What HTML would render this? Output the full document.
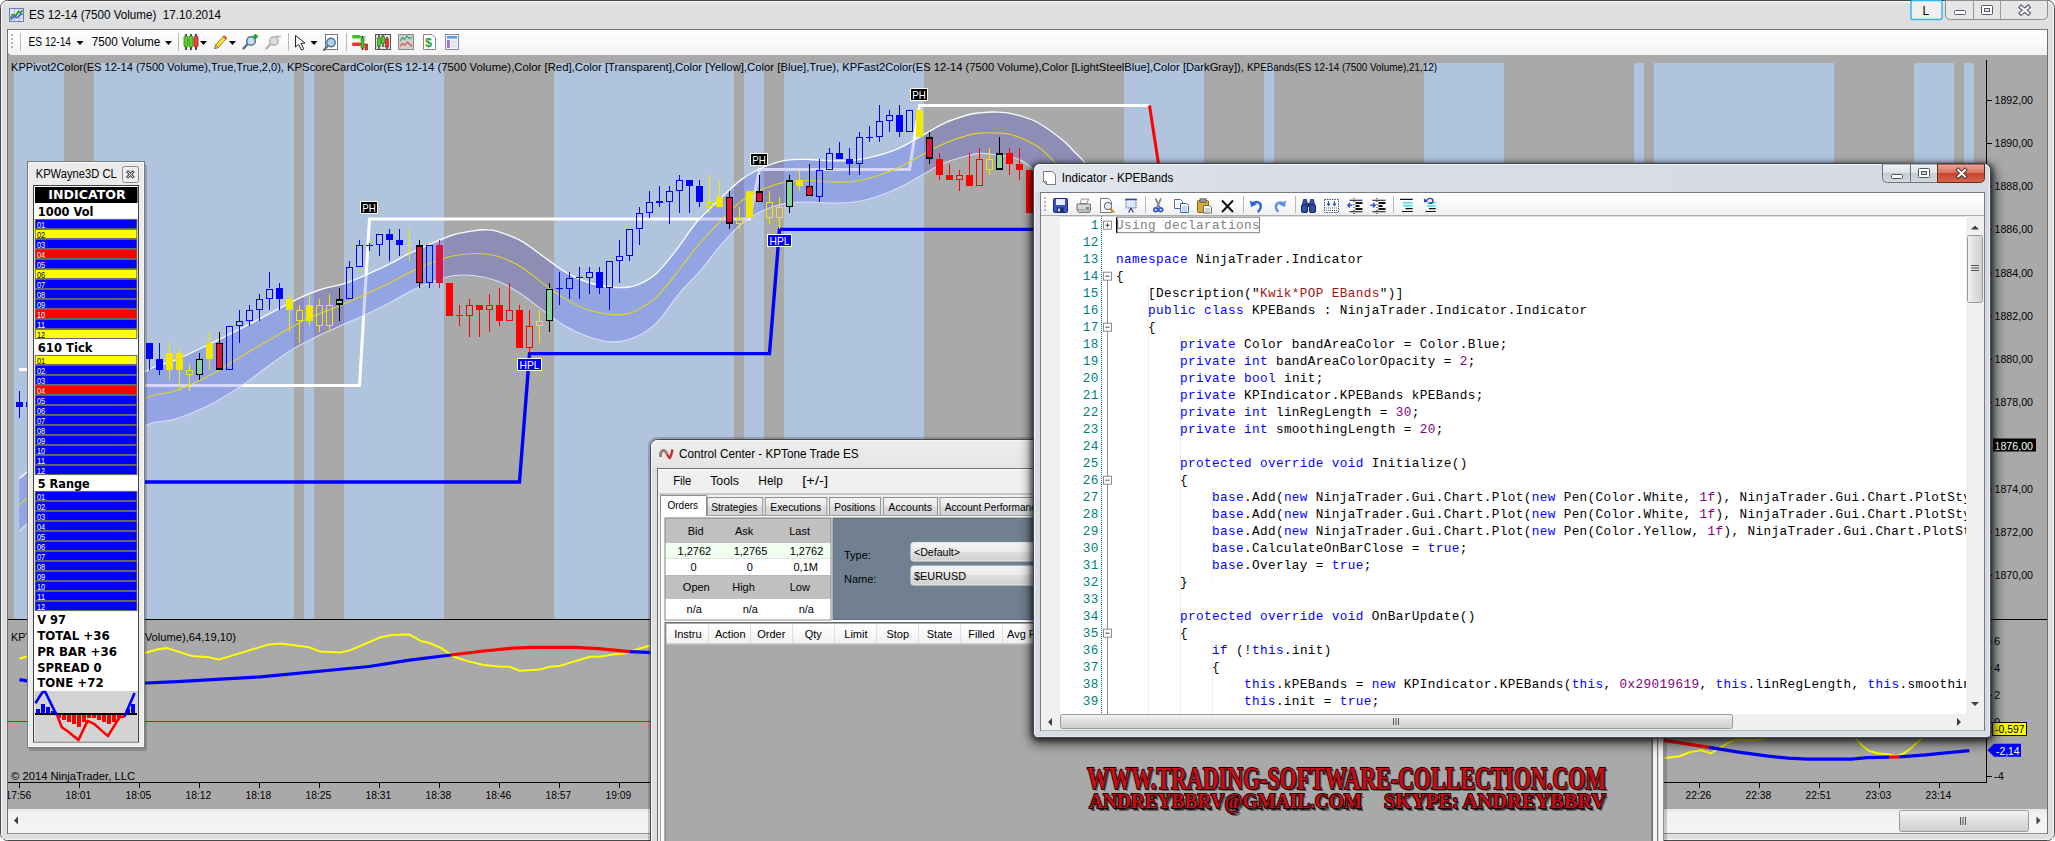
<!DOCTYPE html>
<html lang="en"><head><meta charset="utf-8"><title>ES 12-14 (7500 Volume) 17.10.2014</title>
<style>
html,body{margin:0;padding:0;background:#fff;overflow:hidden;width:2055px;height:841px}
svg{display:block;position:absolute;left:0;top:0}
text{white-space:pre}
</style></head><body>
<svg width="2055" height="841" viewBox="0 0 2055 841">
<defs>
<linearGradient id="gTitle" x1="0" y1="0" x2="0" y2="1"><stop offset="0" stop-color="#ebebeb"/><stop offset="0.006" stop-color="#dedfe1"/><stop offset="1" stop-color="#dedfe1"/></linearGradient>
<linearGradient id="gTool" x1="0" y1="0" x2="0" y2="1"><stop offset="0" stop-color="#ffffff"/><stop offset="0.6" stop-color="#f8f8f8"/><stop offset="1" stop-color="#f2f2f2"/></linearGradient>
<linearGradient id="gScroll" x1="0" y1="0" x2="0" y2="1"><stop offset="0" stop-color="#e6e6e6"/><stop offset="0.2" stop-color="#f2f2f2"/><stop offset="1" stop-color="#f4f4f4"/></linearGradient>
<linearGradient id="gThumb" x1="0" y1="0" x2="0" y2="1"><stop offset="0" stop-color="#f4f4f4"/><stop offset="0.5" stop-color="#dedede"/><stop offset="1" stop-color="#cfcfcf"/></linearGradient>
<linearGradient id="gThumbH" x1="0" y1="0" x2="1" y2="0"><stop offset="0" stop-color="#f4f4f4"/><stop offset="0.5" stop-color="#dedede"/><stop offset="1" stop-color="#cfcfcf"/></linearGradient>
<clipPath id="clipChart"><rect x="8" y="55" width="2039" height="754"/></clipPath>
<clipPath id="clipPrice"><rect x="13.5" y="62.5" width="1972.5" height="556.5"/></clipPath>

<linearGradient id="gKpShadow" x1="0" y1="0" x2="0" y2="1"><stop offset="0" stop-color="#000" stop-opacity=".25"/><stop offset="1" stop-color="#000" stop-opacity="0"/></linearGradient>

<linearGradient id="gCCTitle" x1="0" y1="0" x2="0" y2="1"><stop offset="0" stop-color="#eeeeee"/><stop offset="0.1" stop-color="#e0e0e0"/><stop offset="1" stop-color="#dadada"/></linearGradient>
<linearGradient id="gTab" x1="0" y1="0" x2="0" y2="1"><stop offset="0" stop-color="#f3f3f3"/><stop offset="0.5" stop-color="#ebebeb"/><stop offset="0.5" stop-color="#dedede"/><stop offset="1" stop-color="#d2d2d2"/></linearGradient>
<linearGradient id="gCombo" x1="0" y1="0" x2="0" y2="1"><stop offset="0" stop-color="#f4f4f4"/><stop offset="0.5" stop-color="#ebebeb"/><stop offset="0.5" stop-color="#dddddd"/><stop offset="1" stop-color="#d0d0d0"/></linearGradient>
<linearGradient id="gHdr" x1="0" y1="0" x2="0" y2="1"><stop offset="0" stop-color="#ffffff"/><stop offset="1" stop-color="#f1f1f1"/></linearGradient>
<clipPath id="clipCC"><rect x="645" y="434" width="1025" height="407"/></clipPath>

<filter id="fShadow" x="-5%" y="-5%" width="110%" height="112%"><feGaussianBlur stdDeviation="6"/></filter>
<filter id="fShadow2" x="-5%" y="-5%" width="110%" height="112%"><feGaussianBlur stdDeviation="2.5"/></filter>
<linearGradient id="gIndTitle" x1="0" y1="0" x2="1" y2="0"><stop offset="0" stop-color="#e4e8ee"/><stop offset="0.2" stop-color="#d9dde5"/><stop offset="1" stop-color="#d6dae2"/></linearGradient>
<linearGradient id="gIndTool" x1="0" y1="0" x2="0" y2="1"><stop offset="0" stop-color="#ffffff"/><stop offset="0.55" stop-color="#f9f9f9"/><stop offset="1" stop-color="#eeeeee"/></linearGradient>
<linearGradient id="gCapBtn" x1="0" y1="0" x2="0" y2="1"><stop offset="0" stop-color="#f1f2f4"/><stop offset="0.48" stop-color="#dfe1e5"/><stop offset="0.5" stop-color="#c8cbd1"/><stop offset="1" stop-color="#d7d9de"/></linearGradient>
<linearGradient id="gCapClose" x1="0" y1="0" x2="0" y2="1"><stop offset="0" stop-color="#eba99b"/><stop offset="0.48" stop-color="#d9705c"/><stop offset="0.5" stop-color="#c7432b"/><stop offset="1" stop-color="#d4694f"/></linearGradient>
<clipPath id="clipCode"><rect x="1041" y="216" width="925" height="498"/></clipPath>
</defs>
<g id="mainwin">
<rect x="0.5" y="0.5" width="2054" height="840" rx="7" ry="7" fill="url(#gTitle)" stroke="#4a4a4a" stroke-width="1"/>
<rect x="1.5" y="1.5" width="2052" height="838" rx="6" ry="6" fill="none" stroke="#f6f6f6" stroke-width="1"/>
<rect x="2" y="29" width="5" height="806" fill="#dedfe1" />
<rect x="2048" y="29" width="5" height="806" fill="#dedfe1" />
<rect x="2" y="835" width="2051" height="4" fill="#dedfe1" />
<g><rect x="9.5" y="8.5" width="14" height="13" fill="#dfe6f5" stroke="#6f7fb5" stroke-width="1"/><path d="M10 14.5H23M10 18H23M14.5 9V21M19 9V21" stroke="#aab4d6" stroke-width="1" fill="none"/><polyline points="10.5,18 13,14.5 15.5,16 18.5,11.5 20.5,13 22.5,10" fill="none" stroke="#2f9a2f" stroke-width="1.6"/><polyline points="10.5,20 14,16.5 17,17.5 22.5,13.5" fill="none" stroke="#3355cc" stroke-width="1.2"/></g>
<text x="29" y="19.3" font-family='"Liberation Sans", sans-serif' font-size="13" fill="#000" textLength="192" lengthAdjust="spacingAndGlyphs" >ES 12-14 (7500 Volume)  17.10.2014</text>
<rect x="1911" y="0.5" width="31" height="19" rx="2" fill="#f0f0f0" stroke="#2fb6ee" stroke-width="1.4"/>
<text x="1922.5" y="15" font-family='"Liberation Sans", sans-serif' font-size="12" fill="#000" >L</text>
<path d="M1945.5 0.5V14.5Q1945.5 19.5 1950.5 19.5H2042.5Q2047.5 19.5 2047.5 14.5V0.5Z" fill="#e6e6e6" stroke="#8c8c8c" stroke-width="1"/>
<line x1="1973.5" y1="1" x2="1973.5" y2="19" stroke="#9a9a9a" stroke-width="1" />
<line x1="2000.5" y1="1" x2="2000.5" y2="19" stroke="#9a9a9a" stroke-width="1" />
<rect x="1954.5" y="10.5" width="11" height="4" rx="1" fill="#fff" stroke="#555a6a" stroke-width="1"/>
<rect x="1981.5" y="5.5" width="11" height="9" rx="1" fill="#fff" stroke="#555a6a" stroke-width="1"/>
<rect x="1984.5" y="8.5" width="5" height="3" fill="#e6e6e6" stroke="#555a6a" stroke-width="1"/>
<path d="M2021.2 7.2L2028.2 13.2M2028.2 7.2L2021.2 13.2" stroke="#555a6a" stroke-width="4.4" stroke-linecap="square"/>
<path d="M2021.2 7.2L2028.2 13.2M2028.2 7.2L2021.2 13.2" stroke="#fff" stroke-width="2.2" stroke-linecap="square"/>
<rect x="7" y="29" width="2041" height="805" fill="#6f6f6f" />
<path d="M8 30H2047V55H11Q8 55 8 52Z" fill="url(#gTool)"/>
<line x1="8" y1="29.5" x2="2047" y2="29.5" stroke="#7d7d7d" stroke-width="1" />
<rect x="11" y="34" width="2" height="2" fill="#b4b4b4" />
<rect x="11" y="38" width="2" height="2" fill="#b4b4b4" />
<rect x="11" y="42" width="2" height="2" fill="#b4b4b4" />
<rect x="11" y="46" width="2" height="2" fill="#b4b4b4" />
<line x1="20.5" y1="33" x2="20.5" y2="51" stroke="#b9b9b9" stroke-width="1" />
<text x="28.5" y="45.6" font-family='"Liberation Sans", sans-serif' font-size="12.5" fill="#000" textLength="42.5" lengthAdjust="spacingAndGlyphs" >ES 12-14</text>
<path d="M76.5 41h7l-3.5 4z" fill="#000"/>
<text x="91.8" y="45.6" font-family='"Liberation Sans", sans-serif' font-size="12.5" fill="#000" textLength="68.5" lengthAdjust="spacingAndGlyphs" >7500 Volume</text>
<path d="M165 41h7l-3.5 4z" fill="#000"/>
<line x1="178.5" y1="33" x2="178.5" y2="51" stroke="#b9b9b9" stroke-width="1" />
<line x1="186" y1="34" x2="186" y2="50" stroke="#222" stroke-width="1.6" />
<rect x="184" y="36" width="4" height="11" rx="1.5" fill="#5ed12a" stroke="#2b7d10" stroke-width="0.8"/>
<line x1="191" y1="34" x2="191" y2="50" stroke="#222" stroke-width="1.6" />
<rect x="189" y="36" width="4" height="11" rx="1.5" fill="#5ed12a" stroke="#2b7d10" stroke-width="0.8"/>
<line x1="196" y1="34" x2="196" y2="50" stroke="#222" stroke-width="1.6" />
<rect x="194" y="36" width="4" height="11" rx="1.5" fill="#f0453a" stroke="#96160f" stroke-width="0.8"/>
<path d="M200 41h7l-3.5 4z" fill="#000"/>
<g transform="translate(213,34)"><path d="M1.5 14.5L3 10.5L11 1.5L14 4L5.5 13.5Z" fill="#f7dd3a" stroke="#b08a12" stroke-width="1"/><path d="M11 1.5L14 4L12.6 5.6L9.7 3Z" fill="#e0584d"/><path d="M1.5 14.5L3 10.5L5.5 13.5Z" fill="#e8c9a0" stroke="#6b5a3a" stroke-width=".6"/></g>
<path d="M229 41h7l-3.5 4z" fill="#000"/>
<g transform="translate(242,34)"><line x1="1.5" y1="14.5" x2="6.5" y2="9" stroke="#5b6f86" stroke-width="2.4" stroke-linecap="round"/><circle cx="9" cy="7" r="4.3" fill="#bfe0f7" stroke="#5b6f86" stroke-width="1.5"/><path d="M11 2.5h5M13.5 0v5" stroke="#12a32a" stroke-width="1.8"/></g>
<g transform="translate(265,34)"><line x1="1.5" y1="14.5" x2="6.5" y2="9" stroke="#b4b4b4" stroke-width="2.4" stroke-linecap="round"/><circle cx="9" cy="7" r="4.3" fill="#dcdcdc" stroke="#b4b4b4" stroke-width="1.5"/><path d="M11 2.5h5" stroke="#b4b4b4" stroke-width="1.6"/></g>
<line x1="288.5" y1="33" x2="288.5" y2="51" stroke="#b9b9b9" stroke-width="1" />
<path d="M295.5 35.5L295.5 47L298.6 44.4L301.6 50L303.8 48.8L300.9 43.4L305 43Z" fill="#fff" stroke="#222" stroke-width="1"/>
<path d="M310.5 41h7l-3.5 4z" fill="#000"/>
<g><rect x="325.5" y="34.5" width="12" height="15" fill="#fff" stroke="#777" stroke-width="1"/><line x1="324" y1="50" x2="328" y2="45.5" stroke="#5b6f86" stroke-width="2.2" stroke-linecap="round"/><circle cx="331" cy="42.5" r="4.2" fill="#a9d4f5" stroke="#5b6f86" stroke-width="1.4"/></g>
<line x1="346.5" y1="33" x2="346.5" y2="51" stroke="#b9b9b9" stroke-width="1" />
<g><rect x="352" y="35" width="9" height="3.6" fill="#3fc22a" rx="1.5"/><rect x="352" y="42.5" width="9" height="3.6" fill="#e8382d" rx="1.5"/><line x1="361" y1="36.8" x2="366" y2="36.8" stroke="#999" stroke-width="1" /><line x1="361" y1="40" x2="366" y2="40" stroke="#bbb" stroke-width="1" /><line x1="361" y1="44.3" x2="366" y2="44.3" stroke="#999" stroke-width="1" /><line x1="362.5" y1="36" x2="362.5" y2="50" stroke="#222" stroke-width="1.4" /><rect x="361" y="38" width="3" height="10" fill="#3fc22a" stroke="#1e6f12" stroke-width=".6"/><rect x="365" y="44" width="2.6" height="6" fill="#e8382d" stroke="#8a1a12" stroke-width=".6"/></g>
<g><rect x="375.5" y="34.5" width="15" height="15" fill="#e4e4e4" stroke="#555" stroke-width="1"/><path d="M376 38.5h14M376 42.5h14M376 46.5h14" stroke="#aaa" stroke-width=".8" stroke-dasharray="1 1"/><line x1="379" y1="35" x2="379" y2="49" stroke="#222" stroke-width="1.2" /><rect x="377.5" y="38" width="3" height="8" fill="#4fc932" stroke="#1e6f12" stroke-width=".6"/><line x1="383" y1="35" x2="383" y2="47" stroke="#222" stroke-width="1.2" /><rect x="381.5" y="36.5" width="3" height="7" fill="#4fc932" stroke="#1e6f12" stroke-width=".6"/><line x1="387" y1="37" x2="387" y2="49" stroke="#222" stroke-width="1.2" /><rect x="385.5" y="39" width="3" height="8" fill="#e8382d" stroke="#8a1a12" stroke-width=".6"/></g>
<g><rect x="398.5" y="34.5" width="15" height="15" fill="#cfcfcf" stroke="#8a8a8a" stroke-width="1"/><polyline points="400,41 402.5,37.5 404.5,39.5 407,36 409.5,38.5 412,37.5" fill="none" stroke="#2ba35a" stroke-width="1.1"/><polyline points="400,46.5 402.5,43.5 405,45 407.5,42 410,44.5 412,46.5" fill="none" stroke="#e0443a" stroke-width="1.1"/></g>
<g><path d="M423.5 34.5h8.5l3.5 3.5v11.5h-12z" fill="#fff" stroke="#888" stroke-width="1"/><text x="425.3" y="47.3" font-family='"Liberation Sans", sans-serif' font-size="12" fill="#1fa02e" font-weight="bold" >$</text></g>
<g><rect x="445.5" y="34.5" width="13" height="15" fill="#f4f4fb" stroke="#8a8aa8" stroke-width="1"/><rect x="447" y="36" width="10" height="2.6" fill="#5aa0e6" /><rect x="447" y="40" width="2.8" height="8" fill="#a06adf" /><rect x="451" y="40.5" width="6" height="3" fill="#dfe3ee" /><rect x="451" y="44.5" width="6" height="3" fill="#dfe3ee" /></g>
</g>
<g id="chart">
<rect x="8" y="55" width="2039" height="754" fill="#a9a9a9" />
<g shape-rendering="crispEdges">
<rect x="14" y="63" width="50" height="556" fill="#b0c4de" />
<rect x="94" y="63" width="200" height="556" fill="#b0c4de" />
<rect x="304" y="63" width="10" height="556" fill="#b0c4de" />
<rect x="344" y="63" width="100" height="556" fill="#b0c4de" />
<rect x="554" y="63" width="180" height="556" fill="#b0c4de" />
<rect x="744" y="63" width="20" height="556" fill="#b0c4de" />
<rect x="784" y="63" width="140" height="556" fill="#b0c4de" />
<rect x="1124" y="63" width="80" height="556" fill="#b0c4de" />
<rect x="1264" y="63" width="10" height="556" fill="#b0c4de" />
<rect x="1424" y="63" width="80" height="556" fill="#b0c4de" />
<rect x="1634" y="63" width="10" height="556" fill="#b0c4de" />
<rect x="1654" y="63" width="180" height="556" fill="#b0c4de" />
<rect x="1914" y="63" width="40" height="556" fill="#b0c4de" />
<rect x="1964" y="63" width="10" height="556" fill="#b0c4de" />
</g>
<rect x="8" y="619" width="2039" height="1" fill="#000" />
<rect x="1986" y="60" width="1" height="723" fill="#000" />
<rect x="8" y="782" width="1979" height="1" fill="#000" />
<rect x="1986" y="575" width="6" height="1" fill="#000" shape-rendering="crispEdges"/>
<text x="1994.5" y="579.46" font-family='"Liberation Sans", sans-serif' font-size="11" fill="#000" textLength="38.5" lengthAdjust="spacingAndGlyphs" >1870,00</text>
<rect x="1986" y="532" width="6" height="1" fill="#000" shape-rendering="crispEdges"/>
<text x="1994.5" y="536.2" font-family='"Liberation Sans", sans-serif' font-size="11" fill="#000" textLength="38.5" lengthAdjust="spacingAndGlyphs" >1872,00</text>
<rect x="1986" y="489" width="6" height="1" fill="#000" shape-rendering="crispEdges"/>
<text x="1994.5" y="492.94" font-family='"Liberation Sans", sans-serif' font-size="11" fill="#000" textLength="38.5" lengthAdjust="spacingAndGlyphs" >1874,00</text>
<rect x="1986" y="402" width="6" height="1" fill="#000" shape-rendering="crispEdges"/>
<text x="1994.5" y="406.42" font-family='"Liberation Sans", sans-serif' font-size="11" fill="#000" textLength="38.5" lengthAdjust="spacingAndGlyphs" >1878,00</text>
<rect x="1986" y="359" width="6" height="1" fill="#000" shape-rendering="crispEdges"/>
<text x="1994.5" y="363.16" font-family='"Liberation Sans", sans-serif' font-size="11" fill="#000" textLength="38.5" lengthAdjust="spacingAndGlyphs" >1880,00</text>
<rect x="1986" y="316" width="6" height="1" fill="#000" shape-rendering="crispEdges"/>
<text x="1994.5" y="319.9" font-family='"Liberation Sans", sans-serif' font-size="11" fill="#000" textLength="38.5" lengthAdjust="spacingAndGlyphs" >1882,00</text>
<rect x="1986" y="273" width="6" height="1" fill="#000" shape-rendering="crispEdges"/>
<text x="1994.5" y="276.64" font-family='"Liberation Sans", sans-serif' font-size="11" fill="#000" textLength="38.5" lengthAdjust="spacingAndGlyphs" >1884,00</text>
<rect x="1986" y="229" width="6" height="1" fill="#000" shape-rendering="crispEdges"/>
<text x="1994.5" y="233.38" font-family='"Liberation Sans", sans-serif' font-size="11" fill="#000" textLength="38.5" lengthAdjust="spacingAndGlyphs" >1886,00</text>
<rect x="1986" y="186" width="6" height="1" fill="#000" shape-rendering="crispEdges"/>
<text x="1994.5" y="190.12" font-family='"Liberation Sans", sans-serif' font-size="11" fill="#000" textLength="38.5" lengthAdjust="spacingAndGlyphs" >1888,00</text>
<rect x="1986" y="143" width="6" height="1" fill="#000" shape-rendering="crispEdges"/>
<text x="1994.5" y="146.86" font-family='"Liberation Sans", sans-serif' font-size="11" fill="#000" textLength="38.5" lengthAdjust="spacingAndGlyphs" >1890,00</text>
<rect x="1986" y="100" width="6" height="1" fill="#000" shape-rendering="crispEdges"/>
<text x="1994.5" y="103.6" font-family='"Liberation Sans", sans-serif' font-size="11" fill="#000" textLength="38.5" lengthAdjust="spacingAndGlyphs" >1892,00</text>
<rect x="1993" y="438.5" width="43" height="13" fill="#000" />
<text x="1994.5" y="449.68" font-family='"Liberation Sans", sans-serif' font-size="11" fill="#fff" textLength="38.5" lengthAdjust="spacingAndGlyphs" >1876,00</text>
<rect x="19" y="782" width="1" height="6" fill="#000" shape-rendering="crispEdges"/>
<text x="18.4" y="799" font-family='"Liberation Sans", sans-serif' font-size="11" fill="#000" text-anchor="middle" textLength="25.6" lengthAdjust="spacingAndGlyphs" clip-path="url(#clipChart)">17:56</text>
<rect x="79" y="782" width="1" height="6" fill="#000" shape-rendering="crispEdges"/>
<text x="78.4" y="799" font-family='"Liberation Sans", sans-serif' font-size="11" fill="#000" text-anchor="middle" textLength="25.6" lengthAdjust="spacingAndGlyphs" clip-path="url(#clipChart)">18:01</text>
<rect x="139" y="782" width="1" height="6" fill="#000" shape-rendering="crispEdges"/>
<text x="138.4" y="799" font-family='"Liberation Sans", sans-serif' font-size="11" fill="#000" text-anchor="middle" textLength="25.6" lengthAdjust="spacingAndGlyphs" clip-path="url(#clipChart)">18:05</text>
<rect x="199" y="782" width="1" height="6" fill="#000" shape-rendering="crispEdges"/>
<text x="198.4" y="799" font-family='"Liberation Sans", sans-serif' font-size="11" fill="#000" text-anchor="middle" textLength="25.6" lengthAdjust="spacingAndGlyphs" clip-path="url(#clipChart)">18:12</text>
<rect x="259" y="782" width="1" height="6" fill="#000" shape-rendering="crispEdges"/>
<text x="258.4" y="799" font-family='"Liberation Sans", sans-serif' font-size="11" fill="#000" text-anchor="middle" textLength="25.6" lengthAdjust="spacingAndGlyphs" clip-path="url(#clipChart)">18:18</text>
<rect x="319" y="782" width="1" height="6" fill="#000" shape-rendering="crispEdges"/>
<text x="318.4" y="799" font-family='"Liberation Sans", sans-serif' font-size="11" fill="#000" text-anchor="middle" textLength="25.6" lengthAdjust="spacingAndGlyphs" clip-path="url(#clipChart)">18:25</text>
<rect x="379" y="782" width="1" height="6" fill="#000" shape-rendering="crispEdges"/>
<text x="378.4" y="799" font-family='"Liberation Sans", sans-serif' font-size="11" fill="#000" text-anchor="middle" textLength="25.6" lengthAdjust="spacingAndGlyphs" clip-path="url(#clipChart)">18:31</text>
<rect x="439" y="782" width="1" height="6" fill="#000" shape-rendering="crispEdges"/>
<text x="438.4" y="799" font-family='"Liberation Sans", sans-serif' font-size="11" fill="#000" text-anchor="middle" textLength="25.6" lengthAdjust="spacingAndGlyphs" clip-path="url(#clipChart)">18:38</text>
<rect x="499" y="782" width="1" height="6" fill="#000" shape-rendering="crispEdges"/>
<text x="498.4" y="799" font-family='"Liberation Sans", sans-serif' font-size="11" fill="#000" text-anchor="middle" textLength="25.6" lengthAdjust="spacingAndGlyphs" clip-path="url(#clipChart)">18:46</text>
<rect x="559" y="782" width="1" height="6" fill="#000" shape-rendering="crispEdges"/>
<text x="558.4" y="799" font-family='"Liberation Sans", sans-serif' font-size="11" fill="#000" text-anchor="middle" textLength="25.6" lengthAdjust="spacingAndGlyphs" clip-path="url(#clipChart)">18:57</text>
<rect x="619" y="782" width="1" height="6" fill="#000" shape-rendering="crispEdges"/>
<text x="618.4" y="799" font-family='"Liberation Sans", sans-serif' font-size="11" fill="#000" text-anchor="middle" textLength="25.6" lengthAdjust="spacingAndGlyphs" clip-path="url(#clipChart)">19:09</text>
<rect x="679" y="782" width="1" height="6" fill="#000" shape-rendering="crispEdges"/>
<rect x="739" y="782" width="1" height="6" fill="#000" shape-rendering="crispEdges"/>
<rect x="799" y="782" width="1" height="6" fill="#000" shape-rendering="crispEdges"/>
<rect x="859" y="782" width="1" height="6" fill="#000" shape-rendering="crispEdges"/>
<rect x="919" y="782" width="1" height="6" fill="#000" shape-rendering="crispEdges"/>
<rect x="979" y="782" width="1" height="6" fill="#000" shape-rendering="crispEdges"/>
<rect x="1039" y="782" width="1" height="6" fill="#000" shape-rendering="crispEdges"/>
<rect x="1099" y="782" width="1" height="6" fill="#000" shape-rendering="crispEdges"/>
<rect x="1159" y="782" width="1" height="6" fill="#000" shape-rendering="crispEdges"/>
<rect x="1219" y="782" width="1" height="6" fill="#000" shape-rendering="crispEdges"/>
<rect x="1279" y="782" width="1" height="6" fill="#000" shape-rendering="crispEdges"/>
<rect x="1339" y="782" width="1" height="6" fill="#000" shape-rendering="crispEdges"/>
<rect x="1399" y="782" width="1" height="6" fill="#000" shape-rendering="crispEdges"/>
<rect x="1459" y="782" width="1" height="6" fill="#000" shape-rendering="crispEdges"/>
<rect x="1519" y="782" width="1" height="6" fill="#000" shape-rendering="crispEdges"/>
<rect x="1579" y="782" width="1" height="6" fill="#000" shape-rendering="crispEdges"/>
<rect x="1639" y="782" width="1" height="6" fill="#000" shape-rendering="crispEdges"/>
<rect x="1699" y="782" width="1" height="6" fill="#000" shape-rendering="crispEdges"/>
<text x="1698.4" y="799" font-family='"Liberation Sans", sans-serif' font-size="11" fill="#000" text-anchor="middle" textLength="25.6" lengthAdjust="spacingAndGlyphs" clip-path="url(#clipChart)">22:26</text>
<rect x="1759" y="782" width="1" height="6" fill="#000" shape-rendering="crispEdges"/>
<text x="1758.4" y="799" font-family='"Liberation Sans", sans-serif' font-size="11" fill="#000" text-anchor="middle" textLength="25.6" lengthAdjust="spacingAndGlyphs" clip-path="url(#clipChart)">22:38</text>
<rect x="1819" y="782" width="1" height="6" fill="#000" shape-rendering="crispEdges"/>
<text x="1818.4" y="799" font-family='"Liberation Sans", sans-serif' font-size="11" fill="#000" text-anchor="middle" textLength="25.6" lengthAdjust="spacingAndGlyphs" clip-path="url(#clipChart)">22:51</text>
<rect x="1879" y="782" width="1" height="6" fill="#000" shape-rendering="crispEdges"/>
<text x="1878.4" y="799" font-family='"Liberation Sans", sans-serif' font-size="11" fill="#000" text-anchor="middle" textLength="25.6" lengthAdjust="spacingAndGlyphs" clip-path="url(#clipChart)">23:03</text>
<rect x="1939" y="782" width="1" height="6" fill="#000" shape-rendering="crispEdges"/>
<text x="1938.4" y="799" font-family='"Liberation Sans", sans-serif' font-size="11" fill="#000" text-anchor="middle" textLength="25.6" lengthAdjust="spacingAndGlyphs" clip-path="url(#clipChart)">23:14</text>
<text x="11" y="779.5" font-family='"Liberation Sans", sans-serif' font-size="11" fill="#000" textLength="124" lengthAdjust="spacingAndGlyphs" >© 2014 NinjaTrader, LLC</text>
<text font-family='"Liberation Sans", sans-serif' font-size="11" fill="#000" y="71"><tspan x="11" textLength="276" lengthAdjust="spacingAndGlyphs">KPPivot2Color(ES 12-14 (7500 Volume),True,True,2,0), </tspan><tspan x="287" textLength="555.3" lengthAdjust="spacingAndGlyphs">KPScoreCardColor(ES 12-14 (7500 Volume),Color [Red],Color [Transparent],Color [Yellow],Color [Blue],True), </tspan><tspan x="842.3" textLength="404.7" lengthAdjust="spacingAndGlyphs">KPFast2Color(ES 12-14 (7500 Volume),Color [LightSteelBlue],Color [DarkGray]), </tspan><tspan x="1247" textLength="190" lengthAdjust="spacingAndGlyphs">KPEBands(ES 12-14 (7500 Volume),21,12)</tspan></text>
<g clip-path="url(#clipPrice)">
<rect x="19" y="368" width="9" height="3" fill="#fff" />
<polyline points="40.0,385.6 359.5,385.6 369.5,219.0 749.5,219.0 759.5,169.5 909.5,169.5 919.5,105.5 1149.5,105.5" fill="none" stroke="#fff" stroke-width="3" stroke-linejoin="miter"/>
<polyline points="1149.5,105.5 1159.5,170.6" fill="none" stroke="#ff0000" stroke-width="3" />
<path d="M19.2 478.5C20.6 477.3 20.5 477.8 27.3 471.4C34.1 465.0 47.9 450.6 60.0 440.0C72.1 429.4 85.9 419.3 100.0 408.0C114.1 396.7 132.2 379.9 144.5 372.0C156.8 364.1 163.3 365.2 173.9 360.7C184.5 356.2 194.6 351.3 207.8 344.9C221.0 338.5 237.9 330.0 253.0 322.3C268.1 314.6 286.9 304.1 298.2 298.6C309.5 293.1 313.2 291.9 320.7 289.5C328.2 287.1 335.8 286.3 343.3 283.9C350.8 281.5 358.4 278.1 365.9 274.9C373.4 271.7 381.5 268.1 388.5 264.7C395.5 261.2 400.8 257.6 407.8 254.2C414.8 250.8 422.9 247.3 430.4 244.1C437.9 240.9 445.5 237.3 453.0 235.0C460.5 232.7 470.0 231.4 475.6 230.5C481.2 229.6 483.1 229.6 486.9 229.8C490.7 230.0 492.6 229.8 498.2 231.6C503.8 233.4 513.2 236.5 520.7 240.7C528.2 244.8 535.8 251.2 543.3 256.5C550.8 261.8 558.4 268.0 565.9 272.3C573.4 276.6 581.0 280.1 588.5 282.5C596.0 284.9 604.3 286.2 611.1 287.0C617.9 287.8 623.6 287.9 629.2 287.0C634.9 286.1 640.5 283.6 645.0 281.3C649.5 279.0 652.5 276.8 656.3 273.4C660.1 270.0 663.6 265.7 667.6 261.0C671.6 256.3 675.2 251.6 680.0 245.2C684.8 238.8 690.0 229.9 696.5 222.3C703.0 214.7 711.6 207.0 719.1 199.8C726.6 192.7 734.2 184.9 741.7 179.4C749.2 173.9 756.8 170.2 764.3 167.0C771.8 163.8 779.4 161.4 786.9 160.2C794.4 158.9 802.0 159.4 809.5 159.5C817.0 159.6 824.5 160.8 832.0 160.9C839.5 161.0 847.1 161.1 854.6 160.2C862.1 159.3 869.7 157.8 877.2 155.7C884.7 153.6 892.3 151.2 899.8 147.8C907.3 144.4 914.9 139.6 922.4 135.4C929.9 131.2 937.5 126.3 945.0 122.9C952.5 119.5 961.8 116.7 967.6 115.0C973.4 113.3 975.4 113.3 980.0 112.8C984.6 112.3 989.6 111.8 995.0 112.0C1000.4 112.2 1005.4 112.0 1012.5 113.8C1019.6 115.5 1029.2 118.1 1037.5 122.5C1045.8 126.9 1056.2 135.0 1062.5 140.0C1068.8 145.0 1071.7 149.2 1075.0 152.5C1078.3 155.8 1079.2 156.2 1082.5 160.0C1085.8 163.8 1092.9 172.5 1095.0 175.0 L1045 180 " fill="none"/>
<path d="M19.2 478.5C20.6 477.3 20.5 477.8 27.3 471.4C34.1 465.0 47.9 450.6 60.0 440.0C72.1 429.4 85.9 419.3 100.0 408.0C114.1 396.7 132.2 379.9 144.5 372.0C156.8 364.1 163.3 365.2 173.9 360.7C184.5 356.2 194.6 351.3 207.8 344.9C221.0 338.5 237.9 330.0 253.0 322.3C268.1 314.6 286.9 304.1 298.2 298.6C309.5 293.1 313.2 291.9 320.7 289.5C328.2 287.1 335.8 286.3 343.3 283.9C350.8 281.5 358.4 278.1 365.9 274.9C373.4 271.7 381.5 268.1 388.5 264.7C395.5 261.2 400.8 257.6 407.8 254.2C414.8 250.8 422.9 247.3 430.4 244.1C437.9 240.9 445.5 237.3 453.0 235.0C460.5 232.7 470.0 231.4 475.6 230.5C481.2 229.6 483.1 229.6 486.9 229.8C490.7 230.0 492.6 229.8 498.2 231.6C503.8 233.4 513.2 236.5 520.7 240.7C528.2 244.8 535.8 251.2 543.3 256.5C550.8 261.8 558.4 268.0 565.9 272.3C573.4 276.6 581.0 280.1 588.5 282.5C596.0 284.9 604.3 286.2 611.1 287.0C617.9 287.8 623.6 287.9 629.2 287.0C634.9 286.1 640.5 283.6 645.0 281.3C649.5 279.0 652.5 276.8 656.3 273.4C660.1 270.0 663.6 265.7 667.6 261.0C671.6 256.3 675.2 251.6 680.0 245.2C684.8 238.8 690.0 229.9 696.5 222.3C703.0 214.7 711.6 207.0 719.1 199.8C726.6 192.7 734.2 184.9 741.7 179.4C749.2 173.9 756.8 170.2 764.3 167.0C771.8 163.8 779.4 161.4 786.9 160.2C794.4 158.9 802.0 159.4 809.5 159.5C817.0 159.6 824.5 160.8 832.0 160.9C839.5 161.0 847.1 161.1 854.6 160.2C862.1 159.3 869.7 157.8 877.2 155.7C884.7 153.6 892.3 151.2 899.8 147.8C907.3 144.4 914.9 139.6 922.4 135.4C929.9 131.2 937.5 126.3 945.0 122.9C952.5 119.5 961.8 116.7 967.6 115.0C973.4 113.3 975.4 113.3 980.0 112.8C984.6 112.3 989.6 111.8 995.0 112.0C1000.4 112.2 1005.4 112.0 1012.5 113.8C1019.6 115.5 1029.2 118.1 1037.5 122.5C1045.8 126.9 1056.2 135.0 1062.5 140.0C1068.8 145.0 1071.7 149.2 1075.0 152.5C1078.3 155.8 1079.2 156.2 1082.5 160.0C1085.8 163.8 1092.9 172.5 1095.0 175.0 L1045.0 180.0C1041.7 177.1 1030.4 166.2 1025.0 162.5C1019.6 158.8 1017.5 158.8 1012.5 157.5C1007.5 156.2 1000.4 155.2 995.0 154.5C989.6 153.8 984.6 153.2 980.0 153.4C975.4 153.6 973.4 154.2 967.6 155.7C961.8 157.2 952.5 159.3 945.0 162.5C937.5 165.7 929.9 170.8 922.4 174.9C914.9 179.0 907.3 183.7 899.8 187.3C892.3 190.9 884.7 194.0 877.2 196.4C869.7 198.8 862.1 200.9 854.6 202.0C847.1 203.1 839.5 203.1 832.0 203.1C824.5 203.1 817.0 202.0 809.5 202.0C802.0 202.0 794.4 201.8 786.9 203.1C779.4 204.4 771.8 206.5 764.3 209.9C756.8 213.3 749.2 217.3 741.7 223.5C734.2 229.7 725.9 239.4 719.1 247.2C712.3 254.9 707.5 262.4 701.0 270.0C694.5 277.6 687.5 283.8 680.0 292.6C672.5 301.5 664.0 315.6 656.3 323.1C648.6 330.6 641.2 334.7 633.7 337.8C626.2 340.9 618.6 342.1 611.1 341.9C603.6 341.7 596.0 339.3 588.5 336.7C581.0 334.1 573.4 330.8 565.9 326.5C558.4 322.2 550.8 316.1 543.3 310.7C535.8 305.2 528.2 298.7 520.7 293.8C513.2 288.9 505.7 284.3 498.2 281.3C490.7 278.3 483.1 276.6 475.6 275.7C468.1 274.8 460.5 274.6 453.0 275.7C445.5 276.8 437.9 279.7 430.4 282.5C422.9 285.3 414.8 289.1 407.8 292.6C400.8 296.1 395.5 299.9 388.5 303.5C381.5 307.1 373.4 310.9 365.9 314.4C358.4 317.9 350.8 321.2 343.3 324.6C335.8 328.0 328.2 331.1 320.7 334.7C313.2 338.3 305.7 341.7 298.2 346.0C290.7 350.3 285.0 354.1 275.6 360.7C266.2 367.3 253.0 378.1 241.7 385.6C230.4 393.1 219.1 400.2 207.8 405.9C196.5 411.5 184.5 416.1 173.9 419.5C163.3 422.9 156.8 419.1 144.5 426.2C132.2 433.3 114.1 450.5 100.0 462.0C85.9 473.5 73.5 483.5 60.0 495.0C46.5 506.5 26.0 525.0 19.2 531.0 Z" fill="#0000ff" fill-opacity="0.16"/>
<path d="M19.2 478.5C20.6 477.3 20.5 477.8 27.3 471.4C34.1 465.0 47.9 450.6 60.0 440.0C72.1 429.4 85.9 419.3 100.0 408.0C114.1 396.7 132.2 379.9 144.5 372.0C156.8 364.1 163.3 365.2 173.9 360.7C184.5 356.2 194.6 351.3 207.8 344.9C221.0 338.5 237.9 330.0 253.0 322.3C268.1 314.6 286.9 304.1 298.2 298.6C309.5 293.1 313.2 291.9 320.7 289.5C328.2 287.1 335.8 286.3 343.3 283.9C350.8 281.5 358.4 278.1 365.9 274.9C373.4 271.7 381.5 268.1 388.5 264.7C395.5 261.2 400.8 257.6 407.8 254.2C414.8 250.8 422.9 247.3 430.4 244.1C437.9 240.9 445.5 237.3 453.0 235.0C460.5 232.7 470.0 231.4 475.6 230.5C481.2 229.6 483.1 229.6 486.9 229.8C490.7 230.0 492.6 229.8 498.2 231.6C503.8 233.4 513.2 236.5 520.7 240.7C528.2 244.8 535.8 251.2 543.3 256.5C550.8 261.8 558.4 268.0 565.9 272.3C573.4 276.6 581.0 280.1 588.5 282.5C596.0 284.9 604.3 286.2 611.1 287.0C617.9 287.8 623.6 287.9 629.2 287.0C634.9 286.1 640.5 283.6 645.0 281.3C649.5 279.0 652.5 276.8 656.3 273.4C660.1 270.0 663.6 265.7 667.6 261.0C671.6 256.3 675.2 251.6 680.0 245.2C684.8 238.8 690.0 229.9 696.5 222.3C703.0 214.7 711.6 207.0 719.1 199.8C726.6 192.7 734.2 184.9 741.7 179.4C749.2 173.9 756.8 170.2 764.3 167.0C771.8 163.8 779.4 161.4 786.9 160.2C794.4 158.9 802.0 159.4 809.5 159.5C817.0 159.6 824.5 160.8 832.0 160.9C839.5 161.0 847.1 161.1 854.6 160.2C862.1 159.3 869.7 157.8 877.2 155.7C884.7 153.6 892.3 151.2 899.8 147.8C907.3 144.4 914.9 139.6 922.4 135.4C929.9 131.2 937.5 126.3 945.0 122.9C952.5 119.5 961.8 116.7 967.6 115.0C973.4 113.3 975.4 113.3 980.0 112.8C984.6 112.3 989.6 111.8 995.0 112.0C1000.4 112.2 1005.4 112.0 1012.5 113.8C1019.6 115.5 1029.2 118.1 1037.5 122.5C1045.8 126.9 1056.2 135.0 1062.5 140.0C1068.8 145.0 1071.7 149.2 1075.0 152.5C1078.3 155.8 1079.2 156.2 1082.5 160.0C1085.8 163.8 1092.9 172.5 1095.0 175.0" fill="none" stroke="#ffffff" stroke-width="1.35" stroke-opacity="0.95"/>
<path d="M19.2 531.0C26.0 525.0 46.5 506.5 60.0 495.0C73.5 483.5 85.9 473.5 100.0 462.0C114.1 450.5 132.2 433.3 144.5 426.2C156.8 419.1 163.3 422.9 173.9 419.5C184.5 416.1 196.5 411.5 207.8 405.9C219.1 400.2 230.4 393.1 241.7 385.6C253.0 378.1 266.2 367.3 275.6 360.7C285.0 354.1 290.7 350.3 298.2 346.0C305.7 341.7 313.2 338.3 320.7 334.7C328.2 331.1 335.8 328.0 343.3 324.6C350.8 321.2 358.4 317.9 365.9 314.4C373.4 310.9 381.5 307.1 388.5 303.5C395.5 299.9 400.8 296.1 407.8 292.6C414.8 289.1 422.9 285.3 430.4 282.5C437.9 279.7 445.5 276.8 453.0 275.7C460.5 274.6 468.1 274.8 475.6 275.7C483.1 276.6 490.7 278.3 498.2 281.3C505.7 284.3 513.2 288.9 520.7 293.8C528.2 298.7 535.8 305.2 543.3 310.7C550.8 316.1 558.4 322.2 565.9 326.5C573.4 330.8 581.0 334.1 588.5 336.7C596.0 339.3 603.6 341.7 611.1 341.9C618.6 342.1 626.2 340.9 633.7 337.8C641.2 334.7 648.6 330.6 656.3 323.1C664.0 315.6 672.5 301.5 680.0 292.6C687.5 283.8 694.5 277.6 701.0 270.0C707.5 262.4 712.3 254.9 719.1 247.2C725.9 239.4 734.2 229.7 741.7 223.5C749.2 217.3 756.8 213.3 764.3 209.9C771.8 206.5 779.4 204.4 786.9 203.1C794.4 201.8 802.0 202.0 809.5 202.0C817.0 202.0 824.5 203.1 832.0 203.1C839.5 203.1 847.1 203.1 854.6 202.0C862.1 200.9 869.7 198.8 877.2 196.4C884.7 194.0 892.3 190.9 899.8 187.3C907.3 183.7 914.9 179.0 922.4 174.9C929.9 170.8 937.5 165.7 945.0 162.5C952.5 159.3 961.8 157.2 967.6 155.7C973.4 154.2 975.4 153.6 980.0 153.4C984.6 153.2 989.6 153.8 995.0 154.5C1000.4 155.2 1007.5 156.2 1012.5 157.5C1017.5 158.8 1019.6 158.8 1025.0 162.5C1030.4 166.2 1041.7 177.1 1045.0 180.0" fill="none" stroke="#e0e0ff" stroke-width="1.1" stroke-opacity="0.9"/>
<path d="M19.2 505.0C26.0 498.8 46.5 479.5 60.0 468.0C73.5 456.5 85.9 447.5 100.0 436.0C114.1 424.5 132.2 406.6 144.5 399.1C156.8 391.6 163.3 395.0 173.9 391.2C184.5 387.4 194.6 383.5 207.8 376.5C221.0 369.5 237.9 358.2 253.0 349.4C268.1 340.5 286.9 329.4 298.2 323.4C309.5 317.4 313.2 316.5 320.7 313.3C328.2 310.1 335.8 307.4 343.3 304.2C350.8 301.0 358.4 297.6 365.9 294.1C373.4 290.7 381.5 286.9 388.5 283.5C395.5 280.1 400.8 276.8 407.8 273.4C414.8 270.0 422.9 266.2 430.4 263.3C437.9 260.4 445.5 257.6 453.0 256.0C460.5 254.4 468.1 253.4 475.6 253.5C483.1 253.6 490.7 254.3 498.2 256.5C505.7 258.7 513.2 262.2 520.7 266.7C528.2 271.2 535.8 278.2 543.3 283.6C550.8 289.1 558.4 295.0 565.9 299.4C573.4 303.8 581.0 307.5 588.5 310.0C596.0 312.5 605.5 313.8 611.1 314.6C616.8 315.4 618.6 315.1 622.4 314.6C626.2 314.1 628.1 314.7 633.7 311.8C639.4 308.9 648.6 304.4 656.3 297.2C664.0 290.0 673.3 276.8 680.0 268.5C686.7 260.2 690.0 254.9 696.5 247.2C703.0 239.5 711.6 230.0 719.1 222.3C726.6 214.6 734.2 206.5 741.7 200.9C749.2 195.3 756.8 191.7 764.3 188.5C771.8 185.3 779.4 183.0 786.9 181.7C794.4 180.4 802.0 180.4 809.5 180.5C817.0 180.6 824.5 182.0 832.0 182.1C839.5 182.2 847.1 182.2 854.6 181.2C862.1 180.2 869.7 178.4 877.2 176.0C884.7 173.6 892.3 170.6 899.8 167.0C907.3 163.4 914.9 158.5 922.4 154.6C929.9 150.7 937.5 146.5 945.0 143.3C952.5 140.1 961.8 137.1 967.6 135.4C973.4 133.7 975.4 133.5 980.0 133.1C984.6 132.7 989.6 132.7 995.0 133.0C1000.4 133.3 1005.4 132.8 1012.5 135.0C1019.6 137.2 1031.2 142.5 1037.5 146.2C1043.8 150.0 1047.1 154.8 1050.0 157.5C1052.9 160.2 1051.7 158.8 1055.0 162.5C1058.3 166.2 1067.5 177.1 1070.0 180.0" fill="none" stroke="#e0d820" stroke-width="1.1"/>
<polyline points="40.0,482.0 519.5,482.0 529.5,353.6 769.5,353.6 779.5,229.4 1040.0,229.4" fill="none" stroke="#0000ff" stroke-width="3.4" stroke-linejoin="miter"/>
<g shape-rendering="crispEdges">
<rect x="19" y="391.232" width="1" height="10.816" fill="#0000ff" />
<rect x="19" y="407.456" width="1" height="10.816" fill="#0000ff" />
<rect x="16" y="402.048" width="7" height="5.408" fill="#0000ff" />
<rect x="29" y="391.232" width="1" height="10.816" fill="#0000ff" />
<rect x="29" y="407.456" width="1" height="10.816" fill="#0000ff" />
<rect x="26" y="402.048" width="7" height="5.408" fill="#0000ff" />
<rect x="149" y="358.784" width="1" height="10.816" fill="#0000ff" />
<rect x="146" y="342.56" width="7" height="16.224" fill="#0000ff" />
<rect x="159" y="342.56" width="1" height="16.224" fill="#0000ff" />
<rect x="159" y="369.6" width="1" height="5.408" fill="#0000ff" />
<rect x="156" y="358.784" width="7" height="10.816" fill="#0000ff" />
<rect x="169" y="342.56" width="1" height="10.816" fill="#f0e800" />
<rect x="169" y="369.6" width="1" height="10.816" fill="#f0e800" />
<rect x="166" y="353.376" width="7" height="16.224" fill="#f0e800" />
<rect x="179" y="347.968" width="1" height="5.408" fill="#f0e800" />
<rect x="179" y="369.6" width="1" height="21.632" fill="#f0e800" />
<rect x="176" y="353.376" width="7" height="16.224" fill="#f0e800" />
<rect x="189" y="364.192" width="1" height="5.408" fill="#f0e800" />
<rect x="189" y="375.008" width="1" height="16.224" fill="#f0e800" />
<rect x="186.5" y="370.1" width="6" height="4.4" fill="none" stroke="#f0e800" stroke-width="1"/>
<rect x="198.8" y="353.376" width="1.4" height="5.408" fill="#000" />
<rect x="198.8" y="375.008" width="1.4" height="5.408" fill="#000" />
<rect x="196.7" y="359.5" width="5.6" height="14.8" fill="#7fd6a0" stroke="#000" stroke-width="1.4"/>
<rect x="209" y="331.744" width="1" height="10.816" fill="#f0e800" />
<rect x="209" y="358.784" width="1" height="10.816" fill="#f0e800" />
<rect x="206" y="342.56" width="7" height="16.224" fill="#f0e800" />
<rect x="218.8" y="331.744" width="1.4" height="10.816" fill="#000" />
<rect x="216.7" y="343.3" width="5.6" height="25.6" fill="#dc143c" stroke="#000" stroke-width="1.4"/>
<rect x="226.5" y="326.8" width="6" height="42.3" fill="none" stroke="#0000ff" stroke-width="1"/>
<rect x="239" y="310.112" width="1" height="10.816" fill="#0000ff" />
<rect x="239" y="326.336" width="1" height="16.224" fill="#0000ff" />
<rect x="236.5" y="321.4" width="6" height="4.4" fill="none" stroke="#0000ff" stroke-width="1"/>
<rect x="249" y="304.704" width="1" height="5.408" fill="#0000ff" />
<rect x="249" y="320.928" width="1" height="5.408" fill="#0000ff" />
<rect x="246.5" y="310.6" width="6" height="9.8" fill="none" stroke="#0000ff" stroke-width="1"/>
<rect x="259" y="293.888" width="1" height="5.408" fill="#0000ff" />
<rect x="259" y="310.112" width="1" height="10.816" fill="#0000ff" />
<rect x="256.5" y="299.8" width="6" height="9.8" fill="none" stroke="#0000ff" stroke-width="1"/>
<rect x="269" y="272.256" width="1" height="16.224" fill="#0000ff" />
<rect x="269" y="299.296" width="1" height="10.816" fill="#0000ff" />
<rect x="266.5" y="289.0" width="6" height="9.8" fill="none" stroke="#0000ff" stroke-width="1"/>
<rect x="279" y="283.072" width="1" height="5.408" fill="#0000ff" />
<rect x="279" y="299.296" width="1" height="10.816" fill="#0000ff" />
<rect x="276" y="288.48" width="7" height="10.816" fill="#0000ff" />
<rect x="289" y="293.888" width="1" height="5.408" fill="#f0e800" />
<rect x="289" y="310.112" width="1" height="21.632" fill="#f0e800" />
<rect x="286" y="299.296" width="7" height="10.816" fill="#f0e800" />
<rect x="299" y="304.704" width="1" height="5.408" fill="#f0e800" />
<rect x="299" y="320.928" width="1" height="21.632" fill="#f0e800" />
<rect x="296.5" y="310.6" width="6" height="9.8" fill="none" stroke="#f0e800" stroke-width="1"/>
<rect x="309" y="293.888" width="1" height="10.816" fill="#f0e800" />
<rect x="309" y="320.928" width="1" height="5.408" fill="#f0e800" />
<rect x="306" y="304.704" width="7" height="16.224" fill="#f0e800" />
<rect x="319" y="299.296" width="1" height="5.408" fill="#f0e800" />
<rect x="319" y="326.336" width="1" height="5.408" fill="#f0e800" />
<rect x="316.5" y="305.2" width="6" height="20.6" fill="none" stroke="#f0e800" stroke-width="1"/>
<rect x="329" y="293.888" width="1" height="10.816" fill="#f0e800" />
<rect x="329" y="326.336" width="1" height="5.408" fill="#f0e800" />
<rect x="326.5" y="305.2" width="6" height="20.6" fill="none" stroke="#f0e800" stroke-width="1"/>
<rect x="338.8" y="288.48" width="1.4" height="10.816" fill="#000" />
<rect x="338.8" y="304.704" width="1.4" height="16.224" fill="#000" />
<rect x="336.7" y="300.0" width="5.6" height="4.0" fill="#7fd6a0" stroke="#000" stroke-width="1.4"/>
<rect x="349" y="261.44" width="1" height="5.408" fill="#0000ff" />
<rect x="346.5" y="267.3" width="6" height="31.4" fill="none" stroke="#0000ff" stroke-width="1"/>
<rect x="359" y="239.808" width="1" height="5.408" fill="#0000ff" />
<rect x="356.5" y="245.7" width="6" height="20.6" fill="none" stroke="#0000ff" stroke-width="1"/>
<rect x="369" y="242.512" width="1" height="8.112" fill="#0000ff" />
<rect x="366" y="244.716" width="7" height="1.2" fill="#0000ff" />
<rect x="379" y="245.216" width="1" height="10.816" fill="#0000ff" />
<rect x="376.5" y="234.9" width="6" height="9.8" fill="none" stroke="#0000ff" stroke-width="1"/>
<rect x="389" y="228.992" width="1" height="5.408" fill="#0000ff" />
<rect x="389" y="239.808" width="1" height="21.632" fill="#0000ff" />
<rect x="386" y="234.4" width="7" height="5.408" fill="#0000ff" />
<rect x="399" y="228.992" width="1" height="10.816" fill="#0000ff" />
<rect x="399" y="245.216" width="1" height="10.816" fill="#0000ff" />
<rect x="396" y="239.808" width="7" height="5.408" fill="#0000ff" />
<rect x="409" y="228.992" width="1" height="32.448" fill="#f0e800" />
<rect x="406" y="244.716" width="7" height="1.2" fill="#f0e800" />
<rect x="418.8" y="239.808" width="1.4" height="5.408" fill="#000" />
<rect x="418.8" y="283.072" width="1.4" height="5.408" fill="#000" />
<rect x="416.7" y="245.9" width="5.6" height="36.5" fill="#dc143c" stroke="#000" stroke-width="1.4"/>
<rect x="429" y="283.072" width="1" height="5.408" fill="#0000ff" />
<rect x="426.5" y="245.7" width="6" height="36.9" fill="none" stroke="#0000ff" stroke-width="1"/>
<rect x="439" y="239.808" width="1" height="5.408" fill="#dc143c" />
<rect x="439" y="283.072" width="1" height="5.408" fill="#dc143c" />
<rect x="436" y="245.216" width="7" height="37.856" fill="#dc143c" />
<rect x="446" y="283.072" width="7" height="32.448" fill="#ff0000" />
<rect x="459" y="304.704" width="1" height="21.632" fill="#ff0000" />
<rect x="456" y="315.02" width="7" height="1.2" fill="#ff0000" />
<rect x="469" y="299.296" width="1" height="5.408" fill="#ff0000" />
<rect x="469" y="315.52" width="1" height="21.632" fill="#ff0000" />
<rect x="466.5" y="305.2" width="6" height="9.8" fill="none" stroke="#ff0000" stroke-width="1"/>
<rect x="479" y="310.112" width="1" height="27.04" fill="#ff0000" />
<rect x="476" y="304.704" width="7" height="5.408" fill="#ff0000" />
<rect x="489" y="293.888" width="1" height="10.816" fill="#ff0000" />
<rect x="489" y="310.112" width="1" height="21.632" fill="#ff0000" />
<rect x="486.5" y="305.2" width="6" height="4.4" fill="none" stroke="#ff0000" stroke-width="1"/>
<rect x="499" y="288.48" width="1" height="16.224" fill="#ff0000" />
<rect x="499" y="320.928" width="1" height="5.408" fill="#ff0000" />
<rect x="496" y="304.704" width="7" height="16.224" fill="#ff0000" />
<rect x="509" y="283.072" width="1" height="27.04" fill="#ff0000" />
<rect x="506.5" y="310.6" width="6" height="9.8" fill="none" stroke="#ff0000" stroke-width="1"/>
<rect x="519" y="304.704" width="1" height="5.408" fill="#ff0000" />
<rect x="516" y="310.112" width="7" height="37.856" fill="#ff0000" />
<rect x="529" y="310.112" width="1" height="16.224" fill="#ff0000" />
<rect x="529" y="347.968" width="1" height="5.408" fill="#ff0000" />
<rect x="526.5" y="326.8" width="6" height="20.6" fill="none" stroke="#ff0000" stroke-width="1"/>
<rect x="539" y="310.112" width="1" height="10.816" fill="#f0e800" />
<rect x="539" y="326.336" width="1" height="16.224" fill="#f0e800" />
<rect x="536.5" y="321.4" width="6" height="4.4" fill="none" stroke="#f0e800" stroke-width="1"/>
<rect x="548.8" y="283.072" width="1.4" height="5.408" fill="#000" />
<rect x="548.8" y="320.928" width="1.4" height="10.816" fill="#000" />
<rect x="546.7" y="289.2" width="5.6" height="31.0" fill="#7fd6a0" stroke="#000" stroke-width="1.4"/>
<rect x="559" y="272.256" width="1" height="32.448" fill="#0000ff" />
<rect x="556" y="287.98" width="7" height="1.2" fill="#0000ff" />
<rect x="569" y="272.256" width="1" height="5.408" fill="#0000ff" />
<rect x="569" y="288.48" width="1" height="10.816" fill="#0000ff" />
<rect x="566.5" y="278.2" width="6" height="9.8" fill="none" stroke="#0000ff" stroke-width="1"/>
<rect x="579" y="266.848" width="1" height="32.448" fill="#0000ff" />
<rect x="576" y="277.164" width="7" height="1.2" fill="#0000ff" />
<rect x="589" y="266.848" width="1" height="5.408" fill="#0000ff" />
<rect x="589" y="277.664" width="1" height="16.224" fill="#0000ff" />
<rect x="586.5" y="272.8" width="6" height="4.4" fill="none" stroke="#0000ff" stroke-width="1"/>
<rect x="599" y="266.848" width="1" height="5.408" fill="#0000ff" />
<rect x="599" y="288.48" width="1" height="5.408" fill="#0000ff" />
<rect x="596" y="272.256" width="7" height="16.224" fill="#0000ff" />
<rect x="609" y="288.48" width="1" height="21.632" fill="#0000ff" />
<rect x="606.5" y="261.9" width="6" height="26.0" fill="none" stroke="#0000ff" stroke-width="1"/>
<rect x="619" y="239.808" width="1" height="16.224" fill="#0000ff" />
<rect x="619" y="261.44" width="1" height="21.632" fill="#0000ff" />
<rect x="616.5" y="256.5" width="6" height="4.4" fill="none" stroke="#0000ff" stroke-width="1"/>
<rect x="629" y="256.032" width="1" height="5.408" fill="#0000ff" />
<rect x="626.5" y="229.5" width="6" height="26.0" fill="none" stroke="#0000ff" stroke-width="1"/>
<rect x="639" y="207.36" width="1" height="5.408" fill="#0000ff" />
<rect x="639" y="228.992" width="1" height="16.224" fill="#0000ff" />
<rect x="636.5" y="213.3" width="6" height="15.2" fill="none" stroke="#0000ff" stroke-width="1"/>
<rect x="649" y="191.136" width="1" height="10.816" fill="#0000ff" />
<rect x="649" y="212.768" width="1" height="5.408" fill="#0000ff" />
<rect x="646.5" y="202.5" width="6" height="9.8" fill="none" stroke="#0000ff" stroke-width="1"/>
<rect x="659" y="185.728" width="1" height="21.632" fill="#0000ff" />
<rect x="656" y="201.452" width="7" height="1.2" fill="#0000ff" />
<rect x="669" y="185.728" width="1" height="5.408" fill="#0000ff" />
<rect x="669" y="201.952" width="1" height="21.632" fill="#0000ff" />
<rect x="666.5" y="191.6" width="6" height="9.8" fill="none" stroke="#0000ff" stroke-width="1"/>
<rect x="679" y="174.912" width="1" height="5.408" fill="#0000ff" />
<rect x="679" y="191.136" width="1" height="21.632" fill="#0000ff" />
<rect x="676.5" y="180.8" width="6" height="9.8" fill="none" stroke="#0000ff" stroke-width="1"/>
<rect x="689" y="185.728" width="1" height="27.04" fill="#0000ff" />
<rect x="686" y="180.32" width="7" height="5.408" fill="#0000ff" />
<rect x="699" y="180.32" width="1" height="5.408" fill="#0000ff" />
<rect x="699" y="201.952" width="1" height="5.408" fill="#0000ff" />
<rect x="696" y="185.728" width="7" height="16.224" fill="#0000ff" />
<rect x="709" y="174.912" width="1" height="27.04" fill="#f0e800" />
<rect x="709" y="207.36" width="1" height="5.408" fill="#f0e800" />
<rect x="706.5" y="202.5" width="6" height="4.4" fill="none" stroke="#f0e800" stroke-width="1"/>
<rect x="719" y="180.32" width="1" height="16.224" fill="#f0e800" />
<rect x="716" y="196.544" width="7" height="10.816" fill="#f0e800" />
<rect x="728.8" y="191.136" width="1.4" height="5.408" fill="#000" />
<rect x="728.8" y="223.584" width="1.4" height="5.408" fill="#000" />
<rect x="726.7" y="197.2" width="5.6" height="25.6" fill="#dc143c" stroke="#000" stroke-width="1.4"/>
<rect x="739" y="207.36" width="1" height="10.816" fill="#f0e800" />
<rect x="739" y="223.584" width="1" height="5.408" fill="#f0e800" />
<rect x="736.5" y="218.7" width="6" height="4.4" fill="none" stroke="#f0e800" stroke-width="1"/>
<rect x="746" y="191.136" width="7" height="27.04" fill="#f0e800" />
<rect x="758.8" y="174.912" width="1.4" height="16.224" fill="#000" />
<rect x="756.7" y="191.8" width="5.6" height="9.4" fill="#dc143c" stroke="#000" stroke-width="1.4"/>
<rect x="769" y="191.136" width="1" height="10.816" fill="#f0e800" />
<rect x="769" y="218.176" width="1" height="5.408" fill="#f0e800" />
<rect x="766.5" y="202.5" width="6" height="15.2" fill="none" stroke="#f0e800" stroke-width="1"/>
<rect x="779" y="196.544" width="1" height="10.816" fill="#f0e800" />
<rect x="779" y="218.176" width="1" height="10.816" fill="#f0e800" />
<rect x="776.5" y="207.9" width="6" height="9.8" fill="none" stroke="#f0e800" stroke-width="1"/>
<rect x="788.8" y="174.912" width="1.4" height="5.408" fill="#000" />
<rect x="788.8" y="207.36" width="1.4" height="5.408" fill="#000" />
<rect x="786.7" y="181.0" width="5.6" height="25.6" fill="#7fd6a0" stroke="#000" stroke-width="1.4"/>
<rect x="799" y="169.504" width="1" height="10.816" fill="#f0e800" />
<rect x="799" y="185.728" width="1" height="5.408" fill="#f0e800" />
<rect x="796" y="180.32" width="7" height="5.408" fill="#f0e800" />
<rect x="808.8" y="164.096" width="1.4" height="21.632" fill="#000" />
<rect x="806.7" y="186.4" width="5.6" height="9.4" fill="#dc143c" stroke="#000" stroke-width="1.4"/>
<rect x="819" y="158.688" width="1" height="10.816" fill="#0000ff" />
<rect x="819" y="196.544" width="1" height="5.408" fill="#0000ff" />
<rect x="816.5" y="170.0" width="6" height="26.0" fill="none" stroke="#0000ff" stroke-width="1"/>
<rect x="829" y="147.872" width="1" height="5.408" fill="#0000ff" />
<rect x="826.5" y="153.8" width="6" height="15.2" fill="none" stroke="#0000ff" stroke-width="1"/>
<rect x="839" y="142.464" width="1" height="10.816" fill="#0000ff" />
<rect x="836" y="153.28" width="7" height="5.408" fill="#0000ff" />
<rect x="849" y="147.872" width="1" height="10.816" fill="#0000ff" />
<rect x="849" y="164.096" width="1" height="10.816" fill="#0000ff" />
<rect x="846" y="158.688" width="7" height="5.408" fill="#0000ff" />
<rect x="859" y="131.648" width="1" height="5.408" fill="#0000ff" />
<rect x="859" y="164.096" width="1" height="10.816" fill="#0000ff" />
<rect x="856.5" y="137.6" width="6" height="26.0" fill="none" stroke="#0000ff" stroke-width="1"/>
<rect x="869" y="126.24" width="1" height="16.224" fill="#0000ff" />
<rect x="866" y="136.556" width="7" height="1.2" fill="#0000ff" />
<rect x="879" y="104.608" width="1" height="16.224" fill="#0000ff" />
<rect x="879" y="137.056" width="1" height="5.408" fill="#0000ff" />
<rect x="876.5" y="121.3" width="6" height="15.2" fill="none" stroke="#0000ff" stroke-width="1"/>
<rect x="889" y="110.016" width="1" height="5.408" fill="#0000ff" />
<rect x="889" y="120.832" width="1" height="10.816" fill="#0000ff" />
<rect x="886.5" y="115.9" width="6" height="4.4" fill="none" stroke="#0000ff" stroke-width="1"/>
<rect x="899" y="104.608" width="1" height="10.816" fill="#0000ff" />
<rect x="899" y="131.648" width="1" height="5.408" fill="#0000ff" />
<rect x="896" y="115.424" width="7" height="16.224" fill="#0000ff" />
<rect x="906.5" y="110.5" width="6" height="20.6" fill="none" stroke="#0000ff" stroke-width="1"/>
<rect x="916" y="110.016" width="7" height="27.04" fill="#f0e800" />
<rect x="928.8" y="131.648" width="1.4" height="5.408" fill="#000" />
<rect x="928.8" y="158.688" width="1.4" height="5.408" fill="#000" />
<rect x="926.7" y="137.8" width="5.6" height="20.2" fill="#dc143c" stroke="#000" stroke-width="1.4"/>
<rect x="939" y="153.28" width="1" height="5.408" fill="#ff0000" />
<rect x="939" y="174.912" width="1" height="5.408" fill="#ff0000" />
<rect x="936" y="158.688" width="7" height="16.224" fill="#ff0000" />
<rect x="949" y="164.096" width="1" height="10.816" fill="#ff0000" />
<rect x="946" y="174.912" width="7" height="5.408" fill="#ff0000" />
<rect x="959" y="169.504" width="1" height="5.408" fill="#ff0000" />
<rect x="959" y="180.32" width="1" height="10.816" fill="#ff0000" />
<rect x="956.5" y="175.4" width="6" height="4.4" fill="none" stroke="#ff0000" stroke-width="1"/>
<rect x="969" y="153.28" width="1" height="21.632" fill="#ff0000" />
<rect x="966" y="174.912" width="7" height="10.816" fill="#ff0000" />
<rect x="979" y="147.872" width="1" height="10.816" fill="#ff0000" />
<rect x="976.5" y="159.2" width="6" height="26.0" fill="none" stroke="#ff0000" stroke-width="1"/>
<rect x="989" y="147.872" width="1" height="10.816" fill="#f0e800" />
<rect x="989" y="169.504" width="1" height="5.408" fill="#f0e800" />
<rect x="986.5" y="159.2" width="6" height="9.8" fill="none" stroke="#f0e800" stroke-width="1"/>
<rect x="998.8" y="137.056" width="1.4" height="16.224" fill="#000" />
<rect x="996.7" y="154.0" width="5.6" height="14.8" fill="#7fd6a0" stroke="#000" stroke-width="1.4"/>
<rect x="1009" y="147.872" width="1" height="5.408" fill="#ff0000" />
<rect x="1009" y="164.096" width="1" height="10.816" fill="#ff0000" />
<rect x="1006" y="153.28" width="7" height="10.816" fill="#ff0000" />
<rect x="1019" y="147.872" width="1" height="16.224" fill="#ff0000" />
<rect x="1019" y="169.504" width="1" height="10.816" fill="#ff0000" />
<rect x="1016" y="164.096" width="7" height="5.408" fill="#ff0000" />
<rect x="1026" y="169.504" width="7" height="43.264" fill="#ff0000" />
</g>
<rect x="360.5" y="201.5" width="17" height="12" fill="#000" stroke="#fff" stroke-width="1"/>
<text x="369" y="211.5" font-family='"Liberation Sans", sans-serif' font-size="10.5" fill="#fff" text-anchor="middle" textLength="13.5" lengthAdjust="spacingAndGlyphs" >PH</text>
<rect x="750.5" y="153.5" width="17" height="12" fill="#000" stroke="#fff" stroke-width="1"/>
<text x="759" y="163.5" font-family='"Liberation Sans", sans-serif' font-size="10.5" fill="#fff" text-anchor="middle" textLength="13.5" lengthAdjust="spacingAndGlyphs" >PH</text>
<rect x="910.5" y="88.5" width="17" height="12" fill="#000" stroke="#fff" stroke-width="1"/>
<text x="919" y="98.5" font-family='"Liberation Sans", sans-serif' font-size="10.5" fill="#fff" text-anchor="middle" textLength="13.5" lengthAdjust="spacingAndGlyphs" >PH</text>
<rect x="517.5" y="358.5" width="24" height="12" fill="#0000ff" stroke="#fff" stroke-width="1"/>
<text x="529.5" y="368.5" font-family='"Liberation Sans", sans-serif' font-size="10.5" fill="#fff" text-anchor="middle" textLength="20" lengthAdjust="spacingAndGlyphs" >HPL</text>
<rect x="767.5" y="234.5" width="24" height="12" fill="#0000ff" stroke="#fff" stroke-width="1"/>
<text x="779.5" y="244.5" font-family='"Liberation Sans", sans-serif' font-size="10.5" fill="#fff" text-anchor="middle" textLength="20" lengthAdjust="spacingAndGlyphs" >HPL</text>
</g>
<text font-family='"Liberation Sans", sans-serif' font-size="11" fill="#000" y="641"><tspan x="11" textLength="133.5" lengthAdjust="spacingAndGlyphs">KPTone3D(ES 12-14 (7500 </tspan><tspan x="144.7" textLength="91.3" lengthAdjust="spacingAndGlyphs">Volume),64,19,10)</tspan></text>
<rect x="8" y="721" width="1978" height="1" fill="#ff0000" shape-rendering="crispEdges"/>
<polyline points="19.5,658.7 28.6,655.9 60.0,652.0 100.0,655.0 130.0,654.0 145.7,652.8 158.0,649.3 167.2,648.1 191.6,655.9 208.8,657.3 218.8,659.6 268.9,644.4 280.4,643.6 309.0,647.3 320.5,651.6 340.6,652.4 350.6,650.1 380.7,637.2 392.1,635.0 409.3,634.4 420.8,641.0 429.4,643.0 440.8,647.8 455.2,657.3 469.5,661.6 483.8,665.0 498.2,666.5 509.6,666.8 519.6,670.8 539.7,669.6 549.7,666.8 559.7,665.9 589.8,656.7 601.3,656.4 612.8,654.4 624.2,653.6 638.6,648.7 652.0,645.0" fill="none" stroke="#ffff00" stroke-width="2" stroke-linejoin="round"/>
<polyline points="19.5,679.7 28.6,681.1 100.0,683.2 145.7,683.0 177.2,681.7 260.3,676.8 369.2,666.5 409.3,660.2 450.9,655.0" fill="none" stroke="#0000ff" stroke-width="3.2" stroke-linejoin="round"/>
<polyline points="450.9,655.0 483.8,651.0 512.5,648.1 532.6,647.3 575.5,647.3 598.5,648.7 630.0,651.6" fill="none" stroke="#ff0000" stroke-width="3.2" stroke-linejoin="round"/>
<polyline points="630.0,651.6 652.0,652.6" fill="none" stroke="#0000ff" stroke-width="3.2" />
<polyline points="1664.8,758.1 1679.6,756.2 1689.4,752.2 1701.2,750.3 1711.1,753.2 1719.0,748.3 1728.8,742.4 1736.7,739.4 1752.5,740.4 1764.3,739.0 1775.0,733.0" fill="none" stroke="#ffff00" stroke-width="2" stroke-linejoin="round"/>
<polyline points="1850.0,730.0 1856.0,738.4 1862.8,746.3 1868.8,750.8 1878.6,753.6 1888.5,754.2 1896.4,756.2 1904.2,753.2 1912.1,747.3 1918.0,741.4 1923.0,737.8 1930.0,730.0" fill="none" stroke="#ffff00" stroke-width="2" stroke-linejoin="round"/>
<polyline points="1650.0,738.0 1664.8,740.4 1709.1,747.3" fill="none" stroke="#ff0000" stroke-width="3.2" />
<polyline points="1709.1,747.3 1738.7,752.2 1768.3,756.2 1788.0,758.1 1807.7,759.1 1851.0,759.1 1866.8,757.7 1889.5,757.2" fill="none" stroke="#0000ff" stroke-width="3.2" stroke-linejoin="round"/>
<polyline points="1889.5,757.2 1899.3,756.8" fill="none" stroke="#ff0000" stroke-width="3.2" />
<polyline points="1899.3,756.8 1925.9,754.8 1945.6,752.8 1969.3,750.7" fill="none" stroke="#0000ff" stroke-width="3.2" stroke-linejoin="round"/>
<rect x="1986" y="641" width="6" height="1" fill="#000" shape-rendering="crispEdges"/>
<text x="1994" y="645" font-family='"Liberation Sans", sans-serif' font-size="11" fill="#000" >6</text>
<rect x="1986" y="668" width="6" height="1" fill="#000" shape-rendering="crispEdges"/>
<text x="1994" y="672" font-family='"Liberation Sans", sans-serif' font-size="11" fill="#000" >4</text>
<rect x="1986" y="695" width="6" height="1" fill="#000" shape-rendering="crispEdges"/>
<text x="1994" y="699" font-family='"Liberation Sans", sans-serif' font-size="11" fill="#000" >2</text>
<rect x="1986" y="722" width="6" height="1" fill="#000" shape-rendering="crispEdges"/>
<text x="1994" y="726" font-family='"Liberation Sans", sans-serif' font-size="11" fill="#000" >0</text>
<rect x="1986" y="776" width="6" height="1" fill="#000" shape-rendering="crispEdges"/>
<text x="1994" y="780" font-family='"Liberation Sans", sans-serif' font-size="11" fill="#000" >-4</text>
<rect x="1992.5" y="722.5" width="34" height="13" fill="#ffff00" stroke="#000" stroke-width="1"/>
<text x="1995" y="733.3" font-family='"Liberation Sans", sans-serif' font-size="11" fill="#000" textLength="29.5" lengthAdjust="spacingAndGlyphs" >-0,597</text>
<path d="M1987.5 750.3L1994 743.8H2021V756.8H1994Z" fill="#0000ff"/>
<text x="1996" y="754.5" font-family='"Liberation Sans", sans-serif' font-size="11" fill="#fff" textLength="23.5" lengthAdjust="spacingAndGlyphs" >-2,14</text>
<rect x="8" y="809" width="2039" height="24" fill="url(#gScroll)" />
<rect x="8" y="833" width="2039" height="1" fill="#8e8e8e" />
<rect x="8" y="834" width="2039" height="1" fill="#e4e5e8" />
<path d="M14 820.5l4-4v8z" fill="#3c3c3c"/>
<path d="M2040.5 820.5l-4-4v8z" fill="#3c3c3c"/>
<rect x="1899.5" y="810.5" width="129" height="21" rx="2" fill="url(#gThumb)" stroke="#9a9a9a" stroke-width="1"/>
<rect x="1960" y="817" width="1" height="8" fill="#555" />
<rect x="1962.5" y="817" width="1" height="8" fill="#555" />
<rect x="1965" y="817" width="1" height="8" fill="#555" />
</g>
<g id="kpwayne">
<rect x="29" y="164" width="118" height="587" rx="2" fill="#000" fill-opacity=".18"/>
<rect x="27.5" y="161.5" width="117" height="586" fill="#ebebeb" stroke="#7a7a7a" stroke-width="1"/>
<rect x="28.5" y="162.5" width="115" height="584" fill="none" stroke="#fafafa" stroke-width="1"/>
<text x="35.7" y="177.6" font-family='"Liberation Sans", sans-serif' font-size="12" fill="#000" textLength="81" lengthAdjust="spacingAndGlyphs" >KPWayne3D CL</text>
<rect x="122.5" y="166.5" width="16" height="16" rx="2" fill="#eeeeee" stroke="#8a8a8a" stroke-width="1"/>
<path d="M128 172L132.8 176.8M132.8 172L128 176.8" stroke="#4a4a4a" stroke-width="2.9" stroke-linecap="square"/>
<path d="M128 172L132.8 176.8M132.8 172L128 176.8" stroke="#fff" stroke-width="1" stroke-linecap="square"/>
<rect x="33.5" y="185.5" width="105" height="556.5" fill="#fff" stroke="#444" stroke-width="1"/>
<rect x="35" y="187" width="102.5" height="16" fill="#000" />
<text x="87" y="198.7" font-family='"DejaVu Sans", "Liberation Sans", sans-serif' font-size="11.5" fill="#fff" text-anchor="middle" font-weight="bold" textLength="77.5" lengthAdjust="spacingAndGlyphs" >INDICATOR</text>
<text x="37.8" y="215.5" font-family='"DejaVu Sans", "Liberation Sans", sans-serif' font-size="11.8" fill="#000" font-weight="bold" textLength="55.6" lengthAdjust="spacingAndGlyphs" >1000 Vol</text>
<rect x="34.8" y="218.9" width="102.6" height="120.2" fill="#696969" />
<rect x="35.7" y="219.9" width="100.7" height="8.1" fill="#0000ff" />
<text x="37" y="228" font-family='"Liberation Sans", sans-serif' font-size="8.5" fill="#fff" textLength="8.2" lengthAdjust="spacingAndGlyphs" >01</text>
<rect x="35.7" y="229.9" width="100.7" height="8.1" fill="#ffff00" />
<text x="37" y="238" font-family='"Liberation Sans", sans-serif' font-size="8.5" fill="#000" textLength="8.2" lengthAdjust="spacingAndGlyphs" >02</text>
<rect x="35.7" y="239.9" width="100.7" height="8.1" fill="#0000ff" />
<text x="37" y="248" font-family='"Liberation Sans", sans-serif' font-size="8.5" fill="#fff" textLength="8.2" lengthAdjust="spacingAndGlyphs" >03</text>
<rect x="35.7" y="249.9" width="100.7" height="8.1" fill="#ff0000" />
<text x="37" y="258" font-family='"Liberation Sans", sans-serif' font-size="8.5" fill="#fff" textLength="8.2" lengthAdjust="spacingAndGlyphs" >04</text>
<rect x="35.7" y="259.9" width="100.7" height="8.1" fill="#0000ff" />
<text x="37" y="268" font-family='"Liberation Sans", sans-serif' font-size="8.5" fill="#fff" textLength="8.2" lengthAdjust="spacingAndGlyphs" >05</text>
<rect x="35.7" y="269.9" width="100.7" height="8.1" fill="#ffff00" />
<text x="37" y="278" font-family='"Liberation Sans", sans-serif' font-size="8.5" fill="#000" textLength="8.2" lengthAdjust="spacingAndGlyphs" >06</text>
<rect x="35.7" y="279.9" width="100.7" height="8.1" fill="#0000ff" />
<text x="37" y="288" font-family='"Liberation Sans", sans-serif' font-size="8.5" fill="#fff" textLength="8.2" lengthAdjust="spacingAndGlyphs" >07</text>
<rect x="35.7" y="289.9" width="100.7" height="8.1" fill="#0000ff" />
<text x="37" y="298" font-family='"Liberation Sans", sans-serif' font-size="8.5" fill="#fff" textLength="8.2" lengthAdjust="spacingAndGlyphs" >08</text>
<rect x="35.7" y="299.9" width="100.7" height="8.1" fill="#0000ff" />
<text x="37" y="308" font-family='"Liberation Sans", sans-serif' font-size="8.5" fill="#fff" textLength="8.2" lengthAdjust="spacingAndGlyphs" >09</text>
<rect x="35.7" y="309.9" width="100.7" height="8.1" fill="#ff0000" />
<text x="37" y="318" font-family='"Liberation Sans", sans-serif' font-size="8.5" fill="#fff" textLength="8.2" lengthAdjust="spacingAndGlyphs" >10</text>
<rect x="35.7" y="319.9" width="100.7" height="8.1" fill="#0000ff" />
<text x="37" y="328" font-family='"Liberation Sans", sans-serif' font-size="8.5" fill="#fff" textLength="8.2" lengthAdjust="spacingAndGlyphs" >11</text>
<rect x="35.7" y="329.9" width="100.7" height="8.1" fill="#ffff00" />
<text x="37" y="338" font-family='"Liberation Sans", sans-serif' font-size="8.5" fill="#000" textLength="8.2" lengthAdjust="spacingAndGlyphs" >12</text>
<text x="37.8" y="351.5" font-family='"DejaVu Sans", "Liberation Sans", sans-serif' font-size="11.8" fill="#000" font-weight="bold" textLength="54.7" lengthAdjust="spacingAndGlyphs" >610 Tick</text>
<rect x="34.8" y="354.9" width="102.6" height="120.2" fill="#696969" />
<rect x="35.7" y="355.9" width="100.7" height="8.1" fill="#ffff00" />
<text x="37" y="364" font-family='"Liberation Sans", sans-serif' font-size="8.5" fill="#000" textLength="8.2" lengthAdjust="spacingAndGlyphs" >01</text>
<rect x="35.7" y="365.9" width="100.7" height="8.1" fill="#0000ff" />
<text x="37" y="374" font-family='"Liberation Sans", sans-serif' font-size="8.5" fill="#fff" textLength="8.2" lengthAdjust="spacingAndGlyphs" >02</text>
<rect x="35.7" y="375.9" width="100.7" height="8.1" fill="#0000ff" />
<text x="37" y="384" font-family='"Liberation Sans", sans-serif' font-size="8.5" fill="#fff" textLength="8.2" lengthAdjust="spacingAndGlyphs" >03</text>
<rect x="35.7" y="385.9" width="100.7" height="8.1" fill="#ff0000" />
<text x="37" y="394" font-family='"Liberation Sans", sans-serif' font-size="8.5" fill="#fff" textLength="8.2" lengthAdjust="spacingAndGlyphs" >04</text>
<rect x="35.7" y="395.9" width="100.7" height="8.1" fill="#0000ff" />
<text x="37" y="404" font-family='"Liberation Sans", sans-serif' font-size="8.5" fill="#fff" textLength="8.2" lengthAdjust="spacingAndGlyphs" >05</text>
<rect x="35.7" y="405.9" width="100.7" height="8.1" fill="#0000ff" />
<text x="37" y="414" font-family='"Liberation Sans", sans-serif' font-size="8.5" fill="#fff" textLength="8.2" lengthAdjust="spacingAndGlyphs" >06</text>
<rect x="35.7" y="415.9" width="100.7" height="8.1" fill="#0000ff" />
<text x="37" y="424" font-family='"Liberation Sans", sans-serif' font-size="8.5" fill="#fff" textLength="8.2" lengthAdjust="spacingAndGlyphs" >07</text>
<rect x="35.7" y="425.9" width="100.7" height="8.1" fill="#0000ff" />
<text x="37" y="434" font-family='"Liberation Sans", sans-serif' font-size="8.5" fill="#fff" textLength="8.2" lengthAdjust="spacingAndGlyphs" >08</text>
<rect x="35.7" y="435.9" width="100.7" height="8.1" fill="#0000ff" />
<text x="37" y="444" font-family='"Liberation Sans", sans-serif' font-size="8.5" fill="#fff" textLength="8.2" lengthAdjust="spacingAndGlyphs" >09</text>
<rect x="35.7" y="445.9" width="100.7" height="8.1" fill="#0000ff" />
<text x="37" y="454" font-family='"Liberation Sans", sans-serif' font-size="8.5" fill="#fff" textLength="8.2" lengthAdjust="spacingAndGlyphs" >10</text>
<rect x="35.7" y="455.9" width="100.7" height="8.1" fill="#0000ff" />
<text x="37" y="464" font-family='"Liberation Sans", sans-serif' font-size="8.5" fill="#fff" textLength="8.2" lengthAdjust="spacingAndGlyphs" >11</text>
<rect x="35.7" y="465.9" width="100.7" height="8.1" fill="#0000ff" />
<text x="37" y="474" font-family='"Liberation Sans", sans-serif' font-size="8.5" fill="#fff" textLength="8.2" lengthAdjust="spacingAndGlyphs" >12</text>
<text x="37.8" y="487.5" font-family='"DejaVu Sans", "Liberation Sans", sans-serif' font-size="11.8" fill="#000" font-weight="bold" textLength="52" lengthAdjust="spacingAndGlyphs" >5 Range</text>
<rect x="34.8" y="490.9" width="102.6" height="120.2" fill="#696969" />
<rect x="35.7" y="491.9" width="100.7" height="8.1" fill="#0000ff" />
<text x="37" y="500" font-family='"Liberation Sans", sans-serif' font-size="8.5" fill="#fff" textLength="8.2" lengthAdjust="spacingAndGlyphs" >01</text>
<rect x="35.7" y="501.9" width="100.7" height="8.1" fill="#0000ff" />
<text x="37" y="510" font-family='"Liberation Sans", sans-serif' font-size="8.5" fill="#fff" textLength="8.2" lengthAdjust="spacingAndGlyphs" >02</text>
<rect x="35.7" y="511.9" width="100.7" height="8.1" fill="#0000ff" />
<text x="37" y="520" font-family='"Liberation Sans", sans-serif' font-size="8.5" fill="#fff" textLength="8.2" lengthAdjust="spacingAndGlyphs" >03</text>
<rect x="35.7" y="521.9" width="100.7" height="8.1" fill="#0000ff" />
<text x="37" y="530" font-family='"Liberation Sans", sans-serif' font-size="8.5" fill="#fff" textLength="8.2" lengthAdjust="spacingAndGlyphs" >04</text>
<rect x="35.7" y="531.9" width="100.7" height="8.1" fill="#0000ff" />
<text x="37" y="540" font-family='"Liberation Sans", sans-serif' font-size="8.5" fill="#fff" textLength="8.2" lengthAdjust="spacingAndGlyphs" >05</text>
<rect x="35.7" y="541.9" width="100.7" height="8.1" fill="#0000ff" />
<text x="37" y="550" font-family='"Liberation Sans", sans-serif' font-size="8.5" fill="#fff" textLength="8.2" lengthAdjust="spacingAndGlyphs" >06</text>
<rect x="35.7" y="551.9" width="100.7" height="8.1" fill="#0000ff" />
<text x="37" y="560" font-family='"Liberation Sans", sans-serif' font-size="8.5" fill="#fff" textLength="8.2" lengthAdjust="spacingAndGlyphs" >07</text>
<rect x="35.7" y="561.9" width="100.7" height="8.1" fill="#0000ff" />
<text x="37" y="570" font-family='"Liberation Sans", sans-serif' font-size="8.5" fill="#fff" textLength="8.2" lengthAdjust="spacingAndGlyphs" >08</text>
<rect x="35.7" y="571.9" width="100.7" height="8.1" fill="#0000ff" />
<text x="37" y="580" font-family='"Liberation Sans", sans-serif' font-size="8.5" fill="#fff" textLength="8.2" lengthAdjust="spacingAndGlyphs" >09</text>
<rect x="35.7" y="581.9" width="100.7" height="8.1" fill="#0000ff" />
<text x="37" y="590" font-family='"Liberation Sans", sans-serif' font-size="8.5" fill="#fff" textLength="8.2" lengthAdjust="spacingAndGlyphs" >10</text>
<rect x="35.7" y="591.9" width="100.7" height="8.1" fill="#0000ff" />
<text x="37" y="600" font-family='"Liberation Sans", sans-serif' font-size="8.5" fill="#fff" textLength="8.2" lengthAdjust="spacingAndGlyphs" >11</text>
<rect x="35.7" y="601.9" width="100.7" height="8.1" fill="#0000ff" />
<text x="37" y="610" font-family='"Liberation Sans", sans-serif' font-size="8.5" fill="#fff" textLength="8.2" lengthAdjust="spacingAndGlyphs" >12</text>
<text x="37.2" y="623.5" font-family='"DejaVu Sans", "Liberation Sans", sans-serif' font-size="11.8" fill="#000" font-weight="bold" textLength="28.7" lengthAdjust="spacingAndGlyphs" >V 97</text>
<text x="37.2" y="639.5" font-family='"DejaVu Sans", "Liberation Sans", sans-serif' font-size="11.8" fill="#000" font-weight="bold" textLength="72.5" lengthAdjust="spacingAndGlyphs" >TOTAL +36</text>
<text x="37.2" y="655.6" font-family='"DejaVu Sans", "Liberation Sans", sans-serif' font-size="11.8" fill="#000" font-weight="bold" textLength="79.7" lengthAdjust="spacingAndGlyphs" >PR BAR +36</text>
<text x="37.2" y="671.6" font-family='"DejaVu Sans", "Liberation Sans", sans-serif' font-size="11.8" fill="#000" font-weight="bold" textLength="64.5" lengthAdjust="spacingAndGlyphs" >SPREAD 0</text>
<text x="37.2" y="687.4" font-family='"DejaVu Sans", "Liberation Sans", sans-serif' font-size="11.8" fill="#000" font-weight="bold" textLength="66.5" lengthAdjust="spacingAndGlyphs" >TONE +72</text>
<rect x="34.5" y="691" width="103.5" height="50.6" fill="#d3d3d3" />
<g shape-rendering="crispEdges">
<rect x="36.4" y="708.8" width="3.3" height="4.7" fill="#0000ff" />
<rect x="41.1" y="704.2" width="3.6" height="9.3" fill="#0000ff" />
<rect x="46.1" y="707" width="3.7" height="6.5" fill="#0000ff" />
<rect x="51.3" y="710.6" width="2.2" height="2.9" fill="#0000ff" />
<rect x="126.3" y="708.8" width="3.2" height="4.7" fill="#0000ff" />
<rect x="131" y="704.2" width="3.6" height="9.3" fill="#0000ff" />
<rect x="57.2" y="714.5" width="3.7" height="3.5" fill="#ff0000" />
<rect x="62.18" y="714.5" width="3.7" height="5.4" fill="#ff0000" />
<rect x="67.16" y="714.5" width="3.7" height="7.2" fill="#ff0000" />
<rect x="72.14" y="714.5" width="3.7" height="9.4" fill="#ff0000" />
<rect x="77.12" y="714.5" width="3.7" height="12.4" fill="#ff0000" />
<rect x="82.1" y="714.5" width="3.7" height="7.2" fill="#ff0000" />
<rect x="87.08" y="714.5" width="3.7" height="3.5" fill="#ff0000" />
<rect x="92.06" y="714.5" width="3.7" height="3.5" fill="#ff0000" />
<rect x="97.04" y="714.5" width="3.7" height="5.4" fill="#ff0000" />
<rect x="102.02" y="714.5" width="3.7" height="7.2" fill="#ff0000" />
<rect x="107" y="714.5" width="3.7" height="9.4" fill="#ff0000" />
<rect x="111.98" y="714.5" width="3.7" height="7.2" fill="#ff0000" />
<rect x="116.96" y="714.5" width="3.7" height="3.5" fill="#ff0000" />
<rect x="35.4" y="713.2" width="101.5" height="1.8" fill="#000" />
</g>
<polyline points="35.4,703.3 42.4,692.2 45.2,691.8 54.4,710.6 57.2,715.2" fill="none" stroke="#0000ff" stroke-width="2.6" stroke-linejoin="round"/>
<polyline points="57.2,715.2 61.8,727.2 68.3,731.8 78.4,740.1 87.6,720.8 94.1,723.9 107.9,736.1 116.2,722.6 119.9,717.1 124.5,716.5" fill="none" stroke="#ff0000" stroke-width="2.6" stroke-linejoin="round"/>
<polyline points="124.5,716.5 134.6,693.1" fill="none" stroke="#0000ff" stroke-width="2.6" />
</g>
<g id="cc">
<g clip-path="url(#clipCC)">
<rect x="648" y="437" width="1019" height="420" rx="9" fill="#000" fill-opacity=".18"/>
<rect x="650.5" y="439.5" width="1013" height="420" rx="7" fill="url(#gCCTitle)" stroke="#4a4a4a" stroke-width="1"/>
<rect x="651.5" y="440.5" width="1011" height="420" rx="6" fill="none" stroke="#f8f8f8" stroke-width="1"/>
<rect x="652" y="468" width="1011" height="380" fill="#dfdfdf" />
<rect x="1652" y="468" width="1" height="380" fill="#6f6f6f" />
<rect x="1653" y="468" width="4" height="380" fill="#f4f4f4" />
<rect x="1657" y="468" width="1.4" height="380" fill="#7a7a7a" />
<rect x="1658.4" y="468" width="5" height="380" fill="#f4f4f4" />
<g><path d="M660.5 457C660 451 663.5 448.5 666 452C667.5 455 668.5 457.5 669.8 458C671 456 672 452.5 672.5 449.5" fill="none" stroke="#c32b2b" stroke-width="2.4"/><path d="M660.5 457C660 451 663.5 448.5 666 452L667 454.5" fill="none" stroke="#8e8580" stroke-width="2.4"/></g>
<text x="679" y="458" font-family='"Liberation Sans", sans-serif' font-size="13" fill="#000" textLength="179.5" lengthAdjust="spacingAndGlyphs" >Control Center - KPTone Trade ES</text>
<rect x="657" y="468" width="995" height="380" fill="#6f6f6f" />
<rect x="658" y="469" width="994" height="380" fill="#f0f0f0" />
<rect x="658" y="469" width="994" height="24.5" fill="#f0f0f0" />
<rect x="658" y="469" width="994" height="1" fill="#fbfbfb" />
<text x="673.2" y="485" font-family='"Liberation Sans", sans-serif' font-size="12.5" fill="#000" textLength="18.1" lengthAdjust="spacingAndGlyphs" >File</text>
<text x="710.2" y="485" font-family='"Liberation Sans", sans-serif' font-size="12.5" fill="#000" textLength="28.8" lengthAdjust="spacingAndGlyphs" >Tools</text>
<text x="758.3" y="485" font-family='"Liberation Sans", sans-serif' font-size="12.5" fill="#000" textLength="24.5" lengthAdjust="spacingAndGlyphs" >Help</text>
<text x="802.3" y="485" font-family='"Liberation Sans", sans-serif' font-size="12.5" fill="#000" textLength="25.7" lengthAdjust="spacingAndGlyphs" >[+/-]</text>
<rect x="659" y="493.5" width="993" height="1" fill="#9d9d9d" />
<rect x="707.4" y="497.5" width="55.30000000000007" height="18" fill="url(#gTab)" stroke="#8e8e8e" stroke-width="1"/>
<text x="711.2" y="510.5" font-family='"Liberation Sans", sans-serif' font-size="11" fill="#000" textLength="46.1" lengthAdjust="spacingAndGlyphs" >Strategies</text>
<rect x="765.2" y="497.5" width="61.69999999999993" height="18" fill="url(#gTab)" stroke="#8e8e8e" stroke-width="1"/>
<text x="770.2" y="510.5" font-family='"Liberation Sans", sans-serif' font-size="11" fill="#000" textLength="51" lengthAdjust="spacingAndGlyphs" >Executions</text>
<rect x="829.5" y="497.5" width="51.10000000000002" height="18" fill="url(#gTab)" stroke="#8e8e8e" stroke-width="1"/>
<text x="834.2" y="510.5" font-family='"Liberation Sans", sans-serif' font-size="11" fill="#000" textLength="41.1" lengthAdjust="spacingAndGlyphs" >Positions</text>
<rect x="883.4" y="497.5" width="54.10000000000002" height="18" fill="url(#gTab)" stroke="#8e8e8e" stroke-width="1"/>
<text x="888.3" y="510.5" font-family='"Liberation Sans", sans-serif' font-size="11" fill="#000" textLength="43.8" lengthAdjust="spacingAndGlyphs" >Accounts</text>
<rect x="940.0" y="497.5" width="102.5" height="18" fill="url(#gTab)" stroke="#8e8e8e" stroke-width="1"/>
<text x="944.8" y="510.5" font-family='"Liberation Sans", sans-serif' font-size="11" fill="#000" textLength="97" lengthAdjust="spacingAndGlyphs" >Account Performance</text>
<rect x="660" y="515" width="992" height="340" fill="#fff" />
<rect x="660" y="515" width="992" height="1" fill="#9d9d9d" />
<path d="M660.5 516V495.5H706.5V516" fill="#fff" stroke="#8e8e8e" stroke-width="1"/>
<rect x="661" y="514" width="45" height="3" fill="#fff" />
<text x="667.4" y="509" font-family='"Liberation Sans", sans-serif' font-size="11" fill="#000" textLength="30.7" lengthAdjust="spacingAndGlyphs" >Orders</text>
<rect x="660" y="515" width="1" height="340" fill="#9d9d9d" />
<rect x="664.5" y="517.5" width="167" height="103" fill="#7f7f7f" />
<rect x="665.5" y="518.5" width="165" height="24.5" fill="#c0c0c0" />
<rect x="665.5" y="543" width="165" height="15.3" fill="#f0fff0" />
<rect x="665.5" y="558.3" width="165" height="17" fill="#ffffff" />
<rect x="665.5" y="575.3" width="165" height="23.5" fill="#c0c0c0" />
<rect x="665.5" y="598.8" width="165" height="20.8" fill="#ffffff" />
<text x="695.7" y="534.7" font-family='"Liberation Sans", sans-serif' font-size="11" fill="#000" text-anchor="middle" >Bid</text>
<text x="744.1" y="534.7" font-family='"Liberation Sans", sans-serif' font-size="11" fill="#000" text-anchor="middle" >Ask</text>
<text x="799.6" y="534.7" font-family='"Liberation Sans", sans-serif' font-size="11" fill="#000" text-anchor="middle" >Last</text>
<text x="694.4" y="555" font-family='"Liberation Sans", sans-serif' font-size="11" fill="#000" text-anchor="middle" >1,2762</text>
<text x="750.5" y="555" font-family='"Liberation Sans", sans-serif' font-size="11" fill="#000" text-anchor="middle" >1,2765</text>
<text x="806.5" y="555" font-family='"Liberation Sans", sans-serif' font-size="11" fill="#000" text-anchor="middle" >1,2762</text>
<text x="693.6" y="571.3" font-family='"Liberation Sans", sans-serif' font-size="11" fill="#000" text-anchor="middle" >0</text>
<text x="749.7" y="571.3" font-family='"Liberation Sans", sans-serif' font-size="11" fill="#000" text-anchor="middle" >0</text>
<text x="805.7" y="571.3" font-family='"Liberation Sans", sans-serif' font-size="11" fill="#000" text-anchor="middle" >0,1M</text>
<text x="696.3" y="591" font-family='"Liberation Sans", sans-serif' font-size="11" fill="#000" text-anchor="middle" >Open</text>
<text x="743.5" y="591" font-family='"Liberation Sans", sans-serif' font-size="11" fill="#000" text-anchor="middle" >High</text>
<text x="799.8" y="591" font-family='"Liberation Sans", sans-serif' font-size="11" fill="#000" text-anchor="middle" >Low</text>
<text x="694.2" y="613" font-family='"Liberation Sans", sans-serif' font-size="11" fill="#000" text-anchor="middle" >n/a</text>
<text x="750.3" y="613" font-family='"Liberation Sans", sans-serif' font-size="11" fill="#000" text-anchor="middle" >n/a</text>
<text x="806.3" y="613" font-family='"Liberation Sans", sans-serif' font-size="11" fill="#000" text-anchor="middle" >n/a</text>
<rect x="832.5" y="517.5" width="820" height="102.5" fill="#5f6b78" />
<rect x="833.5" y="518.5" width="818" height="100.5" fill="#708090" />
<text x="844" y="558.7" font-family='"Liberation Sans", sans-serif' font-size="11" fill="#000" >Type:</text>
<text x="844" y="582.5" font-family='"Liberation Sans", sans-serif' font-size="11" fill="#000" >Name:</text>
<rect x="911" y="542.5" width="160" height="18.5" rx="2.5" fill="url(#gCombo)" stroke="#e8e8e8" stroke-width="1"/>
<rect x="911" y="566" width="160" height="19" rx="2.5" fill="url(#gCombo)" stroke="#e8e8e8" stroke-width="1"/>
<text x="914" y="556" font-family='"Liberation Sans", sans-serif' font-size="11" fill="#000" textLength="46" lengthAdjust="spacingAndGlyphs" >&lt;Default&gt;</text>
<text x="914" y="580" font-family='"Liberation Sans", sans-serif' font-size="11" fill="#000" textLength="52" lengthAdjust="spacingAndGlyphs" >$EURUSD</text>
<rect x="664.5" y="622" width="988" height="230" fill="#696969" />
<rect x="665.5" y="623" width="986" height="229" fill="#a9a9a9" />
<rect x="666.5" y="624" width="985" height="19.5" fill="url(#gHdr)" />
<rect x="666.5" y="643.5" width="985" height="1" fill="#d0d0d0" />
<rect x="708.1" y="625" width="1" height="17.5" fill="#dcdcdc" />
<rect x="750.1" y="625" width="1" height="17.5" fill="#dcdcdc" />
<rect x="792.1" y="625" width="1" height="17.5" fill="#dcdcdc" />
<rect x="834.1" y="625" width="1" height="17.5" fill="#dcdcdc" />
<rect x="876.1" y="625" width="1" height="17.5" fill="#dcdcdc" />
<rect x="918.1" y="625" width="1" height="17.5" fill="#dcdcdc" />
<rect x="960.1" y="625" width="1" height="17.5" fill="#dcdcdc" />
<rect x="1002.1" y="625" width="1" height="17.5" fill="#dcdcdc" />
<rect x="1044.1" y="625" width="1" height="17.5" fill="#dcdcdc" />
<rect x="1086.1" y="625" width="1" height="17.5" fill="#dcdcdc" />
<rect x="1128.1" y="625" width="1" height="17.5" fill="#dcdcdc" />
<rect x="1170.1" y="625" width="1" height="17.5" fill="#dcdcdc" />
<rect x="1212.1" y="625" width="1" height="17.5" fill="#dcdcdc" />
<rect x="1254.1" y="625" width="1" height="17.5" fill="#dcdcdc" />
<rect x="1296.1" y="625" width="1" height="17.5" fill="#dcdcdc" />
<rect x="1338.1" y="625" width="1" height="17.5" fill="#dcdcdc" />
<rect x="1380.1" y="625" width="1" height="17.5" fill="#dcdcdc" />
<rect x="1422.1" y="625" width="1" height="17.5" fill="#dcdcdc" />
<rect x="1464.1" y="625" width="1" height="17.5" fill="#dcdcdc" />
<rect x="1506.1" y="625" width="1" height="17.5" fill="#dcdcdc" />
<rect x="1548.1" y="625" width="1" height="17.5" fill="#dcdcdc" />
<rect x="1590.1" y="625" width="1" height="17.5" fill="#dcdcdc" />
<rect x="1632.1" y="625" width="1" height="17.5" fill="#dcdcdc" />
<text x="687.9" y="638" font-family='"Liberation Sans", sans-serif' font-size="11" fill="#000" text-anchor="middle" >Instru</text>
<text x="730.3" y="638" font-family='"Liberation Sans", sans-serif' font-size="11" fill="#000" text-anchor="middle" >Action</text>
<text x="771.3" y="638" font-family='"Liberation Sans", sans-serif' font-size="11" fill="#000" text-anchor="middle" >Order</text>
<text x="813.2" y="638" font-family='"Liberation Sans", sans-serif' font-size="11" fill="#000" text-anchor="middle" >Qty</text>
<text x="855.9" y="638" font-family='"Liberation Sans", sans-serif' font-size="11" fill="#000" text-anchor="middle" >Limit</text>
<text x="897.7" y="638" font-family='"Liberation Sans", sans-serif' font-size="11" fill="#000" text-anchor="middle" >Stop</text>
<text x="939.6" y="638" font-family='"Liberation Sans", sans-serif' font-size="11" fill="#000" text-anchor="middle" >State</text>
<text x="981.4" y="638" font-family='"Liberation Sans", sans-serif' font-size="11" fill="#000" text-anchor="middle" >Filled</text>
<text x="1007" y="638" font-family='"Liberation Sans", sans-serif' font-size="11" fill="#000" >Avg Price</text>
</g>
</g>
<g id="watermark">
<text x="1089.2" y="790.8" font-family='"Liberation Serif", serif' font-size="31" fill="#000" font-weight="bold" textLength="519" lengthAdjust="spacingAndGlyphs" fill-opacity="0.45">WWW.TRADING-SOFTWARE-COLLECTION.COM</text>
<text x="1088.2" y="789.8" font-family='"Liberation Serif", serif' font-size="31" fill="#000" font-weight="bold" textLength="519" lengthAdjust="spacingAndGlyphs" fill-opacity="0.7">WWW.TRADING-SOFTWARE-COLLECTION.COM</text>
<text x="1087" y="788.6" font-family='"Liberation Serif", serif' font-size="31" fill="#c40f17" font-weight="bold" textLength="519" lengthAdjust="spacingAndGlyphs" stroke="#1c0002" stroke-width="1.9" stroke-linejoin="round" paint-order="stroke">WWW.TRADING-SOFTWARE-COLLECTION.COM</text>
<text x="1091.2" y="810.6" font-family='"Liberation Serif", serif' font-size="20.5" fill="#000" font-weight="bold" textLength="273" lengthAdjust="spacingAndGlyphs" fill-opacity="0.45">ANDREYBBRV@GMAIL.COM</text>
<text x="1090.2" y="809.6" font-family='"Liberation Serif", serif' font-size="20.5" fill="#000" font-weight="bold" textLength="273" lengthAdjust="spacingAndGlyphs" fill-opacity="0.7">ANDREYBBRV@GMAIL.COM</text>
<text x="1089" y="808.4" font-family='"Liberation Serif", serif' font-size="20.5" fill="#c40f17" font-weight="bold" textLength="273" lengthAdjust="spacingAndGlyphs" stroke="#1c0002" stroke-width="1.9" stroke-linejoin="round" paint-order="stroke">ANDREYBBRV@GMAIL.COM</text>
<text x="1386.2" y="810.6" font-family='"Liberation Serif", serif' font-size="20.5" fill="#000" font-weight="bold" textLength="222" lengthAdjust="spacingAndGlyphs" fill-opacity="0.45">SKYPE: ANDREYBBRV</text>
<text x="1385.2" y="809.6" font-family='"Liberation Serif", serif' font-size="20.5" fill="#000" font-weight="bold" textLength="222" lengthAdjust="spacingAndGlyphs" fill-opacity="0.7">SKYPE: ANDREYBBRV</text>
<text x="1384" y="808.4" font-family='"Liberation Serif", serif' font-size="20.5" fill="#c40f17" font-weight="bold" textLength="222" lengthAdjust="spacingAndGlyphs" stroke="#1c0002" stroke-width="1.9" stroke-linejoin="round" paint-order="stroke">SKYPE: ANDREYBBRV</text>
</g>
<g id="indwin">
<rect x="1030" y="166" width="966" height="579" rx="8" fill="#000" fill-opacity=".5" filter="url(#fShadow)"/>
<rect x="1031" y="163" width="962" height="578" rx="8" fill="#000" fill-opacity=".55" filter="url(#fShadow2)"/>
<path d="M1033.5 170.5Q1033.5 163.5 1040.5 163.5H1983.5Q1990.5 163.5 1990.5 170.5V732.5Q1990.5 737.5 1985.5 737.5H1038.5Q1033.5 737.5 1033.5 732.5Z" fill="url(#gIndTitle)" stroke="#3f4650" stroke-width="1"/>
<path d="M1034.5 171Q1034.5 164.5 1041 164.5H1983Q1989.5 164.5 1989.5 171V732Q1989.5 736.5 1985 736.5H1039Q1034.5 736.5 1034.5 732Z" fill="none" stroke="#f7f9fb" stroke-width="1" stroke-opacity=".85"/>
<path d="M1043.5 171.5H1052.5L1055.5 174.5V184.5H1046.5L1043.5 181.5Z" fill="#fff" stroke="#7a7a7a" stroke-width="1"/><path d="M1043.5 181.5H1046.5V184.5" fill="none" stroke="#7a7a7a" stroke-width="1"/>
<text x="1061.8" y="182.3" font-family='"Liberation Sans", sans-serif' font-size="12.8" fill="#000" textLength="111.5" lengthAdjust="spacingAndGlyphs" >Indicator - KPEBands</text>
<path d="M1882.5 164V177.5Q1882.5 182.5 1887.5 182.5H1910.5V164Z" fill="url(#gCapBtn)" stroke="#6d7480" stroke-width="1"/>
<path d="M1910.5 164V182.5H1937.5V164Z" fill="url(#gCapBtn)" stroke="#6d7480" stroke-width="1"/>
<path d="M1937.5 164V182.5H1979.5Q1984.5 182.5 1984.5 177.5V164Z" fill="url(#gCapClose)" stroke="#5e2a22" stroke-width="1"/>
<rect x="1891.5" y="174.5" width="11" height="4" rx="1" fill="#fff" stroke="#4e5563" stroke-width="1"/>
<rect x="1918.5" y="168.5" width="11" height="9" rx="1" fill="#fff" stroke="#4e5563" stroke-width="1"/>
<rect x="1921.5" y="171.5" width="5" height="3" fill="#cfd2d8" stroke="#4e5563" stroke-width="1"/>
<path d="M1958.2 170L1965 176.6M1965 170L1958.2 176.6" stroke="#4a3530" stroke-width="4" stroke-linecap="square"/>
<path d="M1958.2 170L1965 176.6M1965 170L1958.2 176.6" stroke="#fff" stroke-width="2" stroke-linecap="square"/>
<rect x="1035" y="192" width="5" height="540" fill="#d7dce5" />
<rect x="1035" y="731" width="955" height="5.5" fill="#d7dce5" />
<rect x="1040" y="192" width="945" height="539" fill="#767b84" />
<rect x="1041" y="193" width="943" height="537" fill="#fff" />
<rect x="1041" y="193" width="943" height="22.5" fill="url(#gIndTool)" />
<rect x="1041" y="215.3" width="943" height="1" fill="#8e8e8e" />
<rect x="1044" y="197" width="2" height="2" fill="#b4b4b4" />
<rect x="1044" y="201" width="2" height="2" fill="#b4b4b4" />
<rect x="1044" y="205" width="2" height="2" fill="#b4b4b4" />
<rect x="1044" y="209" width="2" height="2" fill="#b4b4b4" />
<line x1="1145.5" y1="196" x2="1145.5" y2="213" stroke="#b9b9b9" stroke-width="1" />
<line x1="1243.5" y1="196" x2="1243.5" y2="213" stroke="#b9b9b9" stroke-width="1" />
<line x1="1295.5" y1="196" x2="1295.5" y2="213" stroke="#b9b9b9" stroke-width="1" />
<line x1="1393.5" y1="196" x2="1393.5" y2="213" stroke="#b9b9b9" stroke-width="1" />
<g transform="translate(1053,198)"><rect x="0.5" y="0.5" width="14" height="14" rx="1" fill="#3a4fcf" stroke="#1d2a86" stroke-width="1"/><rect x="3" y="1" width="9" height="6" fill="#e9ecf7"/><rect x="4" y="9.5" width="7" height="5" fill="#20307a"/><rect x="5" y="10.5" width="2" height="3" fill="#cfd5f0"/></g>
<g transform="translate(1076,198)"><path d="M4 5.5L5.5 1h7L11 5.5z" fill="#fff" stroke="#777" stroke-width=".8"/><path d="M1 6h13.5v6H1z" fill="#d9d9d9" stroke="#666" stroke-width=".9"/><path d="M1 12l2 2.5h10.5l1-2.5" fill="#bdbdbd" stroke="#666" stroke-width=".8"/><rect x="10" y="9" width="3" height="2" fill="#2fc02f"/></g>
<g transform="translate(1099,198)"><path d="M1.5 .5h8l3 3v11h-11z" fill="#fff" stroke="#777" stroke-width="1"/><circle cx="9" cy="8" r="3.6" fill="#e6f2fb" stroke="#777" stroke-width="1.2"/><line x1="11.5" y1="10.8" x2="15" y2="14.5" stroke="#c58a2a" stroke-width="2"/></g>
<g transform="translate(1122,198)"><rect x="4" y="1.5" width="10" height="8.5" fill="#dbe9f7" stroke="#4a5a9a" stroke-width="1" stroke-dasharray="1.5 1"/><rect x="3.2" y="0.6" width="11.6" height="1.6" fill="#3c4c9c"/><path d="M6.5 14.5l2.5-4 2.5 4" fill="none" stroke="#3344aa" stroke-width="1.3"/><path d="M9 10v2" stroke="#333" stroke-width="1"/></g>
<g transform="translate(1151,198)"><path d="M4.5 .5L8.5 9.5M10 .5L6 9.5" stroke="#7a7f88" stroke-width="1.8" fill="none"/><circle cx="4.8" cy="11.8" r="1.9" fill="none" stroke="#2d57c8" stroke-width="1.7"/><circle cx="9.7" cy="11.8" r="1.9" fill="none" stroke="#2d57c8" stroke-width="1.7"/></g>
<g transform="translate(1174,198)"><path d="M.5 1.5h6l2 2v7h-8z" fill="#fff" stroke="#4a6ab0" stroke-width="1"/><path d="M6.5 5.5h6l2 2v7h-8z" fill="#fff" stroke="#4a6ab0" stroke-width="1"/><path d="M8 9h5M8 11h5M8 13h5" stroke="#7fa0e0" stroke-width=".9"/></g>
<g transform="translate(1197,198)"><rect x="0.5" y="2.5" width="11" height="12" rx="1" fill="#d9a83a" stroke="#8a6514" stroke-width="1"/><rect x="3" y="0.8" width="6" height="3.4" fill="#9a9a9a" stroke="#555" stroke-width=".8"/><path d="M6.5 7.5h6l2 2v5.5h-8z" fill="#fff" stroke="#666" stroke-width="1"/><path d="M8 11h5M8 13h5" stroke="#999" stroke-width=".9"/></g>
<g transform="translate(1220,198)"><path d="M2 2.5L13 14M13 2.5L2 14" stroke="#111" stroke-width="2" fill="none"/></g>
<g transform="translate(1249,198)"><path d="M3 6.5C6.5 2 13 4 11.5 10C11 12 9.5 13.5 8.5 14" fill="none" stroke="#2f62d6" stroke-width="2.4"/><path d="M.8 2.5L2 9L8 6.5z" fill="#2f62d6"/></g>
<g transform="translate(1272,198)"><path d="M11.5 6.5C8.5 3 3.5 4.5 4 9.5C4.3 11.5 5.5 13 6.5 13.5" fill="none" stroke="#5a8fe6" stroke-width="2.4"/><path d="M14 2.5L13 9L7 6.5z" fill="#5a8fe6"/></g>
<g transform="translate(1301,198)"><path d="M2.5 1.5h3l1 5h-5zM9.5 1.5h3l1 5h-5z" fill="#2d4fb0" stroke="#16245e" stroke-width=".8"/><rect x="0.5" y="6.5" width="6" height="8" rx="1.5" fill="#2d4fb0" stroke="#16245e" stroke-width="1"/><rect x="8.5" y="6.5" width="6" height="8" rx="1.5" fill="#2d4fb0" stroke="#16245e" stroke-width="1"/><rect x="6.5" y="5" width="2" height="4" fill="#16245e"/></g>
<g transform="translate(1324,198)"><rect x="0.5" y="1.5" width="14" height="13" fill="#fff" stroke="#2d4fb0" stroke-width="1" stroke-dasharray="1.5 1"/><path d="M4.5 3v4M10.5 3v4M3 5.5l1.5 2 1.5-2M9 5.5l1.5 2 1.5-2" stroke="#2d4fb0" stroke-width="1.1" fill="none"/><path d="M2 10h11M2 12.5h11" stroke="#555" stroke-width="1" stroke-dasharray="1 1"/></g>
<g transform="translate(1347,198)"><path d="M2.5 2.2h13M2.5 13.8h13" stroke="#111" stroke-width="1.1"/><path d="M8.5 5h7M8.5 8h4M8.5 11h7" stroke="#111" stroke-width="1.9"/><path d="M5.5 7.2H1M3 5L.8 7.2L3 9.4" stroke="#2d57c8" stroke-width="1.4" fill="none"/><path d="M7 0v16" stroke="#111" stroke-width="1" stroke-dasharray="1 2"/></g>
<g transform="translate(1370,198)"><path d="M2.5 2.2h13M2.5 13.8h13" stroke="#111" stroke-width="1.1"/><path d="M8.5 5h7M8.5 8h4M8.5 11h7" stroke="#111" stroke-width="1.9"/><path d="M.5 7.2H5M3 5L5.2 7.2L3 9.4" stroke="#2d57c8" stroke-width="1.4" fill="none"/><path d="M7 0v16" stroke="#111" stroke-width="1" stroke-dasharray="1 2"/></g>
<g transform="translate(1399,198)"><path d="M1 1.4h12.7M6.5 10.6h7.2M3 13.5h10.7" stroke="#111" stroke-width="1.2"/><path d="M4 4.8h9.7M4 7.8h9.7" stroke="#10e0f0" stroke-width="1.3"/></g>
<g transform="translate(1422,198)"><path d="M7 10.6h6.7M3.5 13.5h10.2" stroke="#111" stroke-width="1.2"/><path d="M5 4.8h8.7M5 7.8h8.7" stroke="#10e0f0" stroke-width="1.3"/><path d="M4.5 2.5C6 -.5 10.5 -.3 11 2.8C11.2 5 8.5 5.8 6.8 4.8" fill="none" stroke="#2d3fb8" stroke-width="1.4"/><path d="M1.8 .3l.4 4.2L6.2 3.3z" fill="#2d3fb8"/></g>
<rect x="1041" y="216" width="19" height="498" fill="#f0f0f0" />
<g clip-path="url(#clipCode)">
<rect x="1148" y="284" width="1" height="430" fill="#ebebeb" />
<rect x="1180" y="335" width="1" height="379" fill="#ebebeb" />
<rect x="1212" y="488" width="1" height="90" fill="#ebebeb" />
<rect x="1212" y="641" width="1" height="73" fill="#ebebeb" />
<line x1="1101.5" y1="216" x2="1101.5" y2="714" stroke="#008080" stroke-width="1" stroke-dasharray="1 1"/>
<rect x="1107" y="276" width="1" height="438" fill="#8c8c8c" />
<text x="1098.68" y="228.7" font-family='"Liberation Mono", monospace' font-size="12.7" fill="#008080" text-anchor="end" letter-spacing="0.379">1</text>
<rect x="1103.5" y="221.2" width="8" height="8" fill="#fff" stroke="#8c8c8c" stroke-width="1"/>
<line x1="1105.5" y1="225.2" x2="1109.5" y2="225.2" stroke="#444" stroke-width="1" />
<line x1="1107.5" y1="223.2" x2="1107.5" y2="227.2" stroke="#444" stroke-width="1" />
<rect x="1116.5" y="217.2" width="143" height="15.5" fill="#fff" stroke="#808080" stroke-width="1"/>
<text x="1116" y="228.7" font-family='"Liberation Mono", monospace' font-size="12.7" fill="#808080" letter-spacing="0.379">Using declarations</text>
<rect x="1116" y="217.7" width="1.4" height="15" fill="#000" />
<text x="1098.68" y="245.7" font-family='"Liberation Mono", monospace' font-size="12.7" fill="#008080" text-anchor="end" letter-spacing="0.379">12</text>
<text x="1098.68" y="262.7" font-family='"Liberation Mono", monospace' font-size="12.7" fill="#008080" text-anchor="end" letter-spacing="0.379">13</text>
<text x="1116" y="262.7" font-family='"Liberation Mono", monospace' font-size="12.7" letter-spacing="0.379" xml:space="preserve"><tspan fill="#0000ff">namespace</tspan><tspan fill="#000"> NinjaTrader.Indicator</tspan></text>
<text x="1098.68" y="279.7" font-family='"Liberation Mono", monospace' font-size="12.7" fill="#008080" text-anchor="end" letter-spacing="0.379">14</text>
<rect x="1103.5" y="272.2" width="8" height="8" fill="#fff" stroke="#8c8c8c" stroke-width="1"/>
<line x1="1105.5" y1="276.2" x2="1109.5" y2="276.2" stroke="#444" stroke-width="1" />
<text x="1116" y="279.7" font-family='"Liberation Mono", monospace' font-size="12.7" letter-spacing="0.379" xml:space="preserve"><tspan fill="#000">{</tspan></text>
<text x="1098.68" y="296.7" font-family='"Liberation Mono", monospace' font-size="12.7" fill="#008080" text-anchor="end" letter-spacing="0.379">15</text>
<text x="1116" y="296.7" font-family='"Liberation Mono", monospace' font-size="12.7" letter-spacing="0.379" xml:space="preserve"><tspan fill="#000">    [Description(</tspan><tspan fill="#000">"</tspan><tspan fill="#a31515">Kwik*POP EBands</tspan><tspan fill="#000">")]</tspan></text>
<text x="1098.68" y="313.7" font-family='"Liberation Mono", monospace' font-size="12.7" fill="#008080" text-anchor="end" letter-spacing="0.379">16</text>
<text x="1116" y="313.7" font-family='"Liberation Mono", monospace' font-size="12.7" letter-spacing="0.379" xml:space="preserve"><tspan fill="#000">    </tspan><tspan fill="#0000ff">public</tspan><tspan fill="#000"> </tspan><tspan fill="#0000ff">class</tspan><tspan fill="#000"> KPEBands : NinjaTrader.Indicator.Indicator</tspan></text>
<text x="1098.68" y="330.7" font-family='"Liberation Mono", monospace' font-size="12.7" fill="#008080" text-anchor="end" letter-spacing="0.379">17</text>
<rect x="1103.5" y="323.2" width="8" height="8" fill="#fff" stroke="#8c8c8c" stroke-width="1"/>
<line x1="1105.5" y1="327.2" x2="1109.5" y2="327.2" stroke="#444" stroke-width="1" />
<text x="1116" y="330.7" font-family='"Liberation Mono", monospace' font-size="12.7" letter-spacing="0.379" xml:space="preserve"><tspan fill="#000">    {</tspan></text>
<text x="1098.68" y="347.7" font-family='"Liberation Mono", monospace' font-size="12.7" fill="#008080" text-anchor="end" letter-spacing="0.379">18</text>
<text x="1116" y="347.7" font-family='"Liberation Mono", monospace' font-size="12.7" letter-spacing="0.379" xml:space="preserve"><tspan fill="#000">        </tspan><tspan fill="#0000ff">private</tspan><tspan fill="#000"> Color bandAreaColor = Color.Blue;</tspan></text>
<text x="1098.68" y="364.7" font-family='"Liberation Mono", monospace' font-size="12.7" fill="#008080" text-anchor="end" letter-spacing="0.379">19</text>
<text x="1116" y="364.7" font-family='"Liberation Mono", monospace' font-size="12.7" letter-spacing="0.379" xml:space="preserve"><tspan fill="#000">        </tspan><tspan fill="#0000ff">private</tspan><tspan fill="#000"> </tspan><tspan fill="#0000ff">int</tspan><tspan fill="#000"> bandAreaColorOpacity = </tspan><tspan fill="#800080">2</tspan><tspan fill="#000">;</tspan></text>
<text x="1098.68" y="381.7" font-family='"Liberation Mono", monospace' font-size="12.7" fill="#008080" text-anchor="end" letter-spacing="0.379">20</text>
<text x="1116" y="381.7" font-family='"Liberation Mono", monospace' font-size="12.7" letter-spacing="0.379" xml:space="preserve"><tspan fill="#000">        </tspan><tspan fill="#0000ff">private</tspan><tspan fill="#000"> </tspan><tspan fill="#0000ff">bool</tspan><tspan fill="#000"> init;</tspan></text>
<text x="1098.68" y="398.7" font-family='"Liberation Mono", monospace' font-size="12.7" fill="#008080" text-anchor="end" letter-spacing="0.379">21</text>
<text x="1116" y="398.7" font-family='"Liberation Mono", monospace' font-size="12.7" letter-spacing="0.379" xml:space="preserve"><tspan fill="#000">        </tspan><tspan fill="#0000ff">private</tspan><tspan fill="#000"> KPIndicator.KPEBands kPEBands;</tspan></text>
<text x="1098.68" y="415.7" font-family='"Liberation Mono", monospace' font-size="12.7" fill="#008080" text-anchor="end" letter-spacing="0.379">22</text>
<text x="1116" y="415.7" font-family='"Liberation Mono", monospace' font-size="12.7" letter-spacing="0.379" xml:space="preserve"><tspan fill="#000">        </tspan><tspan fill="#0000ff">private</tspan><tspan fill="#000"> </tspan><tspan fill="#0000ff">int</tspan><tspan fill="#000"> linRegLength = </tspan><tspan fill="#800080">30</tspan><tspan fill="#000">;</tspan></text>
<text x="1098.68" y="432.7" font-family='"Liberation Mono", monospace' font-size="12.7" fill="#008080" text-anchor="end" letter-spacing="0.379">23</text>
<text x="1116" y="432.7" font-family='"Liberation Mono", monospace' font-size="12.7" letter-spacing="0.379" xml:space="preserve"><tspan fill="#000">        </tspan><tspan fill="#0000ff">private</tspan><tspan fill="#000"> </tspan><tspan fill="#0000ff">int</tspan><tspan fill="#000"> smoothingLength = </tspan><tspan fill="#800080">20</tspan><tspan fill="#000">;</tspan></text>
<text x="1098.68" y="449.7" font-family='"Liberation Mono", monospace' font-size="12.7" fill="#008080" text-anchor="end" letter-spacing="0.379">24</text>
<text x="1098.68" y="466.7" font-family='"Liberation Mono", monospace' font-size="12.7" fill="#008080" text-anchor="end" letter-spacing="0.379">25</text>
<text x="1116" y="466.7" font-family='"Liberation Mono", monospace' font-size="12.7" letter-spacing="0.379" xml:space="preserve"><tspan fill="#000">        </tspan><tspan fill="#0000ff">protected</tspan><tspan fill="#000"> </tspan><tspan fill="#0000ff">override</tspan><tspan fill="#000"> </tspan><tspan fill="#0000ff">void</tspan><tspan fill="#000"> Initialize()</tspan></text>
<text x="1098.68" y="483.7" font-family='"Liberation Mono", monospace' font-size="12.7" fill="#008080" text-anchor="end" letter-spacing="0.379">26</text>
<rect x="1103.5" y="476.2" width="8" height="8" fill="#fff" stroke="#8c8c8c" stroke-width="1"/>
<line x1="1105.5" y1="480.2" x2="1109.5" y2="480.2" stroke="#444" stroke-width="1" />
<text x="1116" y="483.7" font-family='"Liberation Mono", monospace' font-size="12.7" letter-spacing="0.379" xml:space="preserve"><tspan fill="#000">        {</tspan></text>
<text x="1098.68" y="500.7" font-family='"Liberation Mono", monospace' font-size="12.7" fill="#008080" text-anchor="end" letter-spacing="0.379">27</text>
<text x="1116" y="500.7" font-family='"Liberation Mono", monospace' font-size="12.7" letter-spacing="0.379" xml:space="preserve"><tspan fill="#000">            </tspan><tspan fill="#0000ff">base</tspan><tspan fill="#000">.Add(</tspan><tspan fill="#0000ff">new</tspan><tspan fill="#000"> NinjaTrader.Gui.Chart.Plot(</tspan><tspan fill="#0000ff">new</tspan><tspan fill="#000"> Pen(Color.White, </tspan><tspan fill="#800080">1f</tspan><tspan fill="#000">), NinjaTrader.Gui.Chart.PlotStyle.Line, </tspan><tspan fill="#000">"</tspan><tspan fill="#a31515">Upper</tspan><tspan fill="#000">"));</tspan></text>
<text x="1098.68" y="517.7" font-family='"Liberation Mono", monospace' font-size="12.7" fill="#008080" text-anchor="end" letter-spacing="0.379">28</text>
<text x="1116" y="517.7" font-family='"Liberation Mono", monospace' font-size="12.7" letter-spacing="0.379" xml:space="preserve"><tspan fill="#000">            </tspan><tspan fill="#0000ff">base</tspan><tspan fill="#000">.Add(</tspan><tspan fill="#0000ff">new</tspan><tspan fill="#000"> NinjaTrader.Gui.Chart.Plot(</tspan><tspan fill="#0000ff">new</tspan><tspan fill="#000"> Pen(Color.White, </tspan><tspan fill="#800080">1f</tspan><tspan fill="#000">), NinjaTrader.Gui.Chart.PlotStyle.Line, </tspan><tspan fill="#000">"</tspan><tspan fill="#a31515">Lower</tspan><tspan fill="#000">"));</tspan></text>
<text x="1098.68" y="534.7" font-family='"Liberation Mono", monospace' font-size="12.7" fill="#008080" text-anchor="end" letter-spacing="0.379">29</text>
<text x="1116" y="534.7" font-family='"Liberation Mono", monospace' font-size="12.7" letter-spacing="0.379" xml:space="preserve"><tspan fill="#000">            </tspan><tspan fill="#0000ff">base</tspan><tspan fill="#000">.Add(</tspan><tspan fill="#0000ff">new</tspan><tspan fill="#000"> NinjaTrader.Gui.Chart.Plot(</tspan><tspan fill="#0000ff">new</tspan><tspan fill="#000"> Pen(Color.Yellow, </tspan><tspan fill="#800080">1f</tspan><tspan fill="#000">), NinjaTrader.Gui.Chart.PlotStyle.Line, </tspan><tspan fill="#000">"</tspan><tspan fill="#a31515">Mid</tspan><tspan fill="#000">"));</tspan></text>
<text x="1098.68" y="551.7" font-family='"Liberation Mono", monospace' font-size="12.7" fill="#008080" text-anchor="end" letter-spacing="0.379">30</text>
<text x="1116" y="551.7" font-family='"Liberation Mono", monospace' font-size="12.7" letter-spacing="0.379" xml:space="preserve"><tspan fill="#000">            </tspan><tspan fill="#0000ff">base</tspan><tspan fill="#000">.CalculateOnBarClose = </tspan><tspan fill="#0000ff">true</tspan><tspan fill="#000">;</tspan></text>
<text x="1098.68" y="568.7" font-family='"Liberation Mono", monospace' font-size="12.7" fill="#008080" text-anchor="end" letter-spacing="0.379">31</text>
<text x="1116" y="568.7" font-family='"Liberation Mono", monospace' font-size="12.7" letter-spacing="0.379" xml:space="preserve"><tspan fill="#000">            </tspan><tspan fill="#0000ff">base</tspan><tspan fill="#000">.Overlay = </tspan><tspan fill="#0000ff">true</tspan><tspan fill="#000">;</tspan></text>
<text x="1098.68" y="585.7" font-family='"Liberation Mono", monospace' font-size="12.7" fill="#008080" text-anchor="end" letter-spacing="0.379">32</text>
<text x="1116" y="585.7" font-family='"Liberation Mono", monospace' font-size="12.7" letter-spacing="0.379" xml:space="preserve"><tspan fill="#000">        }</tspan></text>
<text x="1098.68" y="602.7" font-family='"Liberation Mono", monospace' font-size="12.7" fill="#008080" text-anchor="end" letter-spacing="0.379">33</text>
<text x="1098.68" y="619.7" font-family='"Liberation Mono", monospace' font-size="12.7" fill="#008080" text-anchor="end" letter-spacing="0.379">34</text>
<text x="1116" y="619.7" font-family='"Liberation Mono", monospace' font-size="12.7" letter-spacing="0.379" xml:space="preserve"><tspan fill="#000">        </tspan><tspan fill="#0000ff">protected</tspan><tspan fill="#000"> </tspan><tspan fill="#0000ff">override</tspan><tspan fill="#000"> </tspan><tspan fill="#0000ff">void</tspan><tspan fill="#000"> OnBarUpdate()</tspan></text>
<text x="1098.68" y="636.7" font-family='"Liberation Mono", monospace' font-size="12.7" fill="#008080" text-anchor="end" letter-spacing="0.379">35</text>
<rect x="1103.5" y="629.2" width="8" height="8" fill="#fff" stroke="#8c8c8c" stroke-width="1"/>
<line x1="1105.5" y1="633.2" x2="1109.5" y2="633.2" stroke="#444" stroke-width="1" />
<text x="1116" y="636.7" font-family='"Liberation Mono", monospace' font-size="12.7" letter-spacing="0.379" xml:space="preserve"><tspan fill="#000">        {</tspan></text>
<text x="1098.68" y="653.7" font-family='"Liberation Mono", monospace' font-size="12.7" fill="#008080" text-anchor="end" letter-spacing="0.379">36</text>
<text x="1116" y="653.7" font-family='"Liberation Mono", monospace' font-size="12.7" letter-spacing="0.379" xml:space="preserve"><tspan fill="#000">            </tspan><tspan fill="#0000ff">if</tspan><tspan fill="#000"> (!</tspan><tspan fill="#0000ff">this</tspan><tspan fill="#000">.init)</tspan></text>
<text x="1098.68" y="670.7" font-family='"Liberation Mono", monospace' font-size="12.7" fill="#008080" text-anchor="end" letter-spacing="0.379">37</text>
<text x="1116" y="670.7" font-family='"Liberation Mono", monospace' font-size="12.7" letter-spacing="0.379" xml:space="preserve"><tspan fill="#000">            {</tspan></text>
<text x="1098.68" y="687.7" font-family='"Liberation Mono", monospace' font-size="12.7" fill="#008080" text-anchor="end" letter-spacing="0.379">38</text>
<text x="1116" y="687.7" font-family='"Liberation Mono", monospace' font-size="12.7" letter-spacing="0.379" xml:space="preserve"><tspan fill="#000">                </tspan><tspan fill="#0000ff">this</tspan><tspan fill="#000">.kPEBands = </tspan><tspan fill="#0000ff">new</tspan><tspan fill="#000"> KPIndicator.KPEBands(</tspan><tspan fill="#0000ff">this</tspan><tspan fill="#000">, </tspan><tspan fill="#800080">0x29019619</tspan><tspan fill="#000">, </tspan><tspan fill="#0000ff">this</tspan><tspan fill="#000">.linRegLength, </tspan><tspan fill="#0000ff">this</tspan><tspan fill="#000">.smoothingLength);</tspan></text>
<text x="1098.68" y="704.7" font-family='"Liberation Mono", monospace' font-size="12.7" fill="#008080" text-anchor="end" letter-spacing="0.379">39</text>
<text x="1116" y="704.7" font-family='"Liberation Mono", monospace' font-size="12.7" letter-spacing="0.379" xml:space="preserve"><tspan fill="#000">                </tspan><tspan fill="#0000ff">this</tspan><tspan fill="#000">.init = </tspan><tspan fill="#0000ff">true</tspan><tspan fill="#000">;</tspan></text>
</g>
<rect x="1966" y="216" width="18" height="498" fill="#f0f0f0" />
<path d="M1971 229.5l4-4 4 4z" fill="#3c3c3c"/>
<path d="M1971 702l4 4 4-4z" fill="#3c3c3c"/>
<rect x="1967.5" y="235.5" width="15" height="67" rx="2" fill="url(#gThumbH)" stroke="#9a9a9a" stroke-width="1"/>
<rect x="1971" y="265" width="8" height="1" fill="#555" />
<rect x="1971" y="267.5" width="8" height="1" fill="#555" />
<rect x="1971" y="270" width="8" height="1" fill="#555" />
<rect x="1041" y="714" width="943" height="16.5" fill="#f0f0f0" />
<path d="M1048 722l4-4v8z" fill="#3c3c3c"/>
<path d="M1961 722l-4-4v8z" fill="#3c3c3c"/>
<rect x="1060.5" y="714.5" width="672" height="14" rx="2" fill="url(#gThumb)" stroke="#9a9a9a" stroke-width="1"/>
<rect x="1393" y="718" width="1" height="7" fill="#555" />
<rect x="1395.5" y="718" width="1" height="7" fill="#555" />
<rect x="1398" y="718" width="1" height="7" fill="#555" />
</g>
</svg>
</body></html>
